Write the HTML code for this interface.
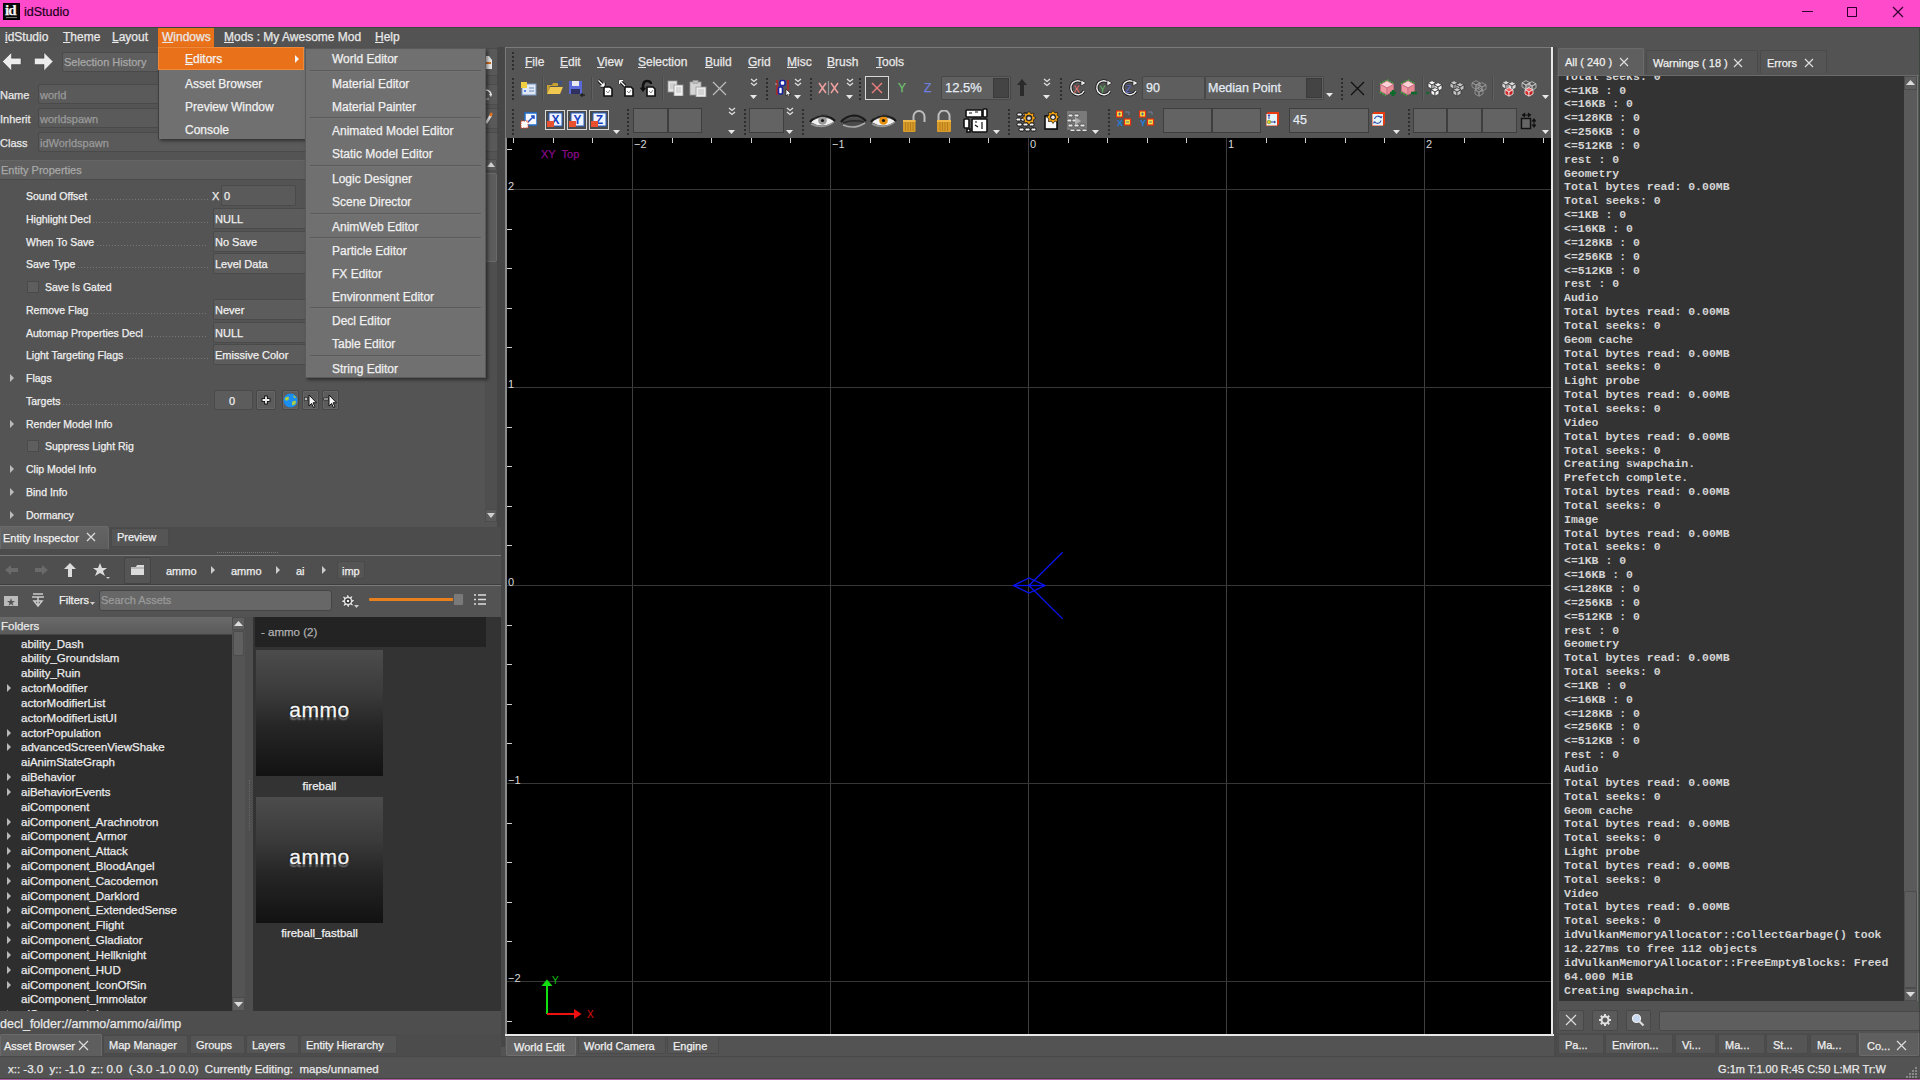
<!DOCTYPE html><html><head><meta charset="utf-8"><title>idStudio</title><style>
*{margin:0;padding:0;box-sizing:border-box}
html,body{width:1920px;height:1080px;overflow:hidden;background:#535353}
body{position:relative;font-family:"Liberation Sans",sans-serif;font-size:12px;color:#f0f0f0}
div{position:absolute}
.t{white-space:nowrap;line-height:14px;-webkit-text-stroke:.25px currentColor}
.m{font-family:"Liberation Mono",monospace;font-size:11.5px;font-weight:bold;white-space:nowrap;line-height:14px;color:#d4d4d4}
u{text-decoration:underline;text-underline-offset:1px}
.fld{background:#5c5c5c;border:1px solid #474747;border-radius:2px}
.btn{background:#5a5a5a;border:1px solid #474747;border-radius:2px}
.tab{background:#555;border:1px solid #484848;border-bottom:none;border-radius:2px 2px 0 0}
.tabA{background:#626262;border:1px solid #6a6a6a;border-bottom:none;border-radius:2px 2px 0 0}
</style></head><body>
<div style="left:0px;top:0px;width:1920px;height:27px;background:#ff4bcb"></div>
<div style="left:3px;top:3px;width:17px;height:17px;background:#0a0a0a;border:1px solid #000"><div class="t" style="left:1px;top:0px;font-family:Liberation Serif;font-size:15px;line-height:13px;font-weight:bold;color:#f4f4f4;letter-spacing:-1px">id</div><div style="left:2px;top:13px;width:11px;height:1px;background:#777"></div></div>
<div class="t" style="left:24px;top:5px;font-size:12.5px;color:#1a001a;-webkit-text-stroke:.2px #1a001a">idStudio</div>
<div style="left:1802px;top:11px;width:11px;height:1px;background:#300030"></div>
<div style="left:1847px;top:7px;width:10px;height:10px;border:1px solid #300030"></div>
<svg style="position:absolute;left:1892px;top:6px;" width="12" height="12" viewBox="0 0 12 12"><path d="M1 1L11 11M11 1L1 11" stroke="#300030" stroke-width="1.2"/></svg>
<div style="left:0px;top:27px;width:1920px;height:22px;background:#535353;border-top:1px solid #3c463c;border-bottom:1px solid #444"></div>
<div style="left:158px;top:28px;width:56px;height:20px;background:#e8711a"></div>
<div class="t" style="left:5px;top:30px;color:#e8e8e8"><u>i</u>dStudio</div>
<div class="t" style="left:63px;top:30px;color:#e8e8e8"><u>T</u>heme</div>
<div class="t" style="left:112px;top:30px;color:#e8e8e8"><u>L</u>ayout</div>
<div class="t" style="left:162px;top:30px;color:#e8e8e8"><u>W</u>indows</div>
<div class="t" style="left:224px;top:30px;color:#e8e8e8"><u>M</u>ods : My Awesome Mod</div>
<div class="t" style="left:375px;top:30px;color:#e8e8e8"><u>H</u>elp</div>
<div style="left:0px;top:47px;width:501px;height:480px;background:#545454"></div>
<div style="left:497px;top:47px;width:8px;height:1000px;background:#474747"></div>
<svg style="position:absolute;left:2px;top:52px;" width="20" height="20" viewBox="0 0 20 20"><path d="M0.5 9.5L9.5 0.5V6.2H19V12.6H9.5V18.7Z" fill="#ececec" stroke="#3a3a3a" stroke-width=".5"/></svg>
<svg style="position:absolute;left:34px;top:52px;" width="20" height="20" viewBox="0 0 20 20"><path d="M19 9.5L10 0.5V6.2H0.5V12.6H10V18.7Z" fill="#ececec" stroke="#3a3a3a" stroke-width=".5"/></svg>
<div style="left:62px;top:52px;width:424px;height:20px;background:#5e5e5e;border:1px solid #4a4a4a;border-radius:2px"></div>
<div class="t" style="left:64px;top:55px;color:#a8a8a8;font-size:11px">Selection History</div>
<div style="left:485px;top:48px;width:13px;height:28px;background:#595959;border:1px solid #4c4c4c;border-radius:2px"></div>
<div style="left:485px;top:84px;width:13px;height:21px;background:#595959;border:1px solid #4c4c4c;border-radius:2px"></div>
<div style="left:485px;top:108px;width:13px;height:21px;background:#595959;border:1px solid #4c4c4c;border-radius:2px"></div>
<div style="left:485px;top:132px;width:13px;height:20px;background:#595959;border:1px solid #4c4c4c;border-radius:2px"></div>
<svg style="position:absolute;left:486px;top:56px;" width="6" height="14" viewBox="0 0 6 14"><path d="M0 0H3L6 4V13H0Z" fill="#e8e8e8"/><rect x="0" y="6" width="5" height="2" fill="#d07020"/></svg>
<svg style="position:absolute;left:486px;top:88px;" width="6" height="12" viewBox="0 0 6 12"><path d="M0 2A5 5 0 0 1 5 7" stroke="#e8e8e8" stroke-width="1.6" fill="none"/><path d="M3 6L5 9L6 6Z" fill="#e8e8e8"/><path d="M0 11H3" stroke="#ccc"/></svg>
<svg style="position:absolute;left:486px;top:111px;" width="7" height="13" viewBox="0 0 7 13"><path d="M0 12L5 4" stroke="#e8e8e8" stroke-width="2.5"/><path d="M4 5L6 2" stroke="#e07020" stroke-width="2.5"/></svg>
<div class="t" style="left:0px;top:88px;font-size:11px;color:#e8e8e8">Name</div>
<div style="left:38px;top:84px;width:447px;height:20px;background:#5a5a5a;border:1px solid #4a4a4a;border-radius:2px"></div>
<div class="t" style="left:40px;top:88px;font-size:11px;color:#9a9a9a">world</div>
<div class="t" style="left:0px;top:112px;font-size:11px;color:#e8e8e8">Inherit</div>
<div style="left:38px;top:108px;width:447px;height:20px;background:#5a5a5a;border:1px solid #4a4a4a;border-radius:2px"></div>
<div class="t" style="left:40px;top:112px;font-size:11px;color:#9a9a9a">worldspawn</div>
<div class="t" style="left:0px;top:136px;font-size:11px;color:#e8e8e8">Class</div>
<div style="left:38px;top:132px;width:447px;height:20px;background:#5a5a5a;border:1px solid #4a4a4a;border-radius:2px"></div>
<div class="t" style="left:40px;top:136px;font-size:11px;color:#9a9a9a">idWorldspawn</div>
<div style="left:0px;top:160px;width:485px;height:20px;background:#5f5f5f;border-top:1px solid #666;border-bottom:1px solid #4a4a4a"></div>
<div class="t" style="left:1px;top:163px;font-size:11px;color:#a8a8a8">Entity Properties</div>
<div style="left:485px;top:159px;width:12px;height:363px;background:#4f4f4f"></div>
<div style="left:485px;top:159px;width:12px;height:12px;background:#5a5a5a;border:1px solid #4c4c4c"></div>
<svg style="position:absolute;left:487px;top:162px;" width="8" height="5" viewBox="0 0 8 5"><path d="M0 5L4 0L8 5Z" fill="#d0d0d0"/></svg>
<div style="left:485px;top:173px;width:12px;height:89px;background:#5c5c5c;border:1px solid #6a6a6a;border-radius:2px"></div>
<div style="left:485px;top:509px;width:12px;height:13px;background:#5a5a5a;border:1px solid #4c4c4c"></div>
<svg style="position:absolute;left:487px;top:513px;" width="8" height="5" viewBox="0 0 8 5"><path d="M0 0L4 5L8 0Z" fill="#d0d0d0"/></svg>
<div class="t" style="left:26px;top:189px;font-size:10.5px">Sound Offset</div>
<div style="left:90px;top:199px;width:118px;height:1px;background:repeating-linear-gradient(90deg,#777 0 1px,transparent 1px 3px)"></div>
<div class="t" style="left:212px;top:189px;font-size:11px">X</div>
<div style="left:221px;top:185px;width:75px;height:21px;background:#5a5a5a;border:1px solid #4a4a4a;border-radius:2px"></div>
<div class="t" style="left:224px;top:189px;font-size:11px">0</div>
<div class="t" style="left:26px;top:212px;font-size:10.5px">Highlight Decl</div>
<div style="left:93px;top:222px;width:115px;height:1px;background:repeating-linear-gradient(90deg,#777 0 1px,transparent 1px 3px)"></div>
<div style="left:213px;top:208px;width:272px;height:21px;background:#5c5c5c;border:1px solid #4a4a4a;border-radius:2px"></div>
<div class="t" style="left:215px;top:212px;font-size:11px">NULL</div>
<div class="t" style="left:26px;top:235px;font-size:10.5px">When To Save</div>
<div style="left:97px;top:245px;width:111px;height:1px;background:repeating-linear-gradient(90deg,#777 0 1px,transparent 1px 3px)"></div>
<div style="left:213px;top:231px;width:272px;height:21px;background:#5c5c5c;border:1px solid #4a4a4a;border-radius:2px"></div>
<div class="t" style="left:215px;top:235px;font-size:11px">No Save</div>
<div class="t" style="left:26px;top:257px;font-size:10.5px">Save Type</div>
<div style="left:78px;top:267px;width:130px;height:1px;background:repeating-linear-gradient(90deg,#777 0 1px,transparent 1px 3px)"></div>
<div style="left:213px;top:253px;width:272px;height:21px;background:#5c5c5c;border:1px solid #4a4a4a;border-radius:2px"></div>
<div class="t" style="left:215px;top:257px;font-size:11px">Level Data</div>
<div style="left:27px;top:281px;width:12px;height:12px;background:#5e5e5e;border:1px solid #4a4a4a"></div>
<div class="t" style="left:45px;top:280px;font-size:10.5px">Save Is Gated</div>
<div class="t" style="left:26px;top:303px;font-size:10.5px">Remove Flag</div>
<div style="left:91px;top:313px;width:117px;height:1px;background:repeating-linear-gradient(90deg,#777 0 1px,transparent 1px 3px)"></div>
<div style="left:213px;top:299px;width:272px;height:21px;background:#5c5c5c;border:1px solid #4a4a4a;border-radius:2px"></div>
<div class="t" style="left:215px;top:303px;font-size:11px">Never</div>
<div class="t" style="left:26px;top:326px;font-size:10.5px">Automap Properties Decl</div>
<div style="left:145px;top:336px;width:63px;height:1px;background:repeating-linear-gradient(90deg,#777 0 1px,transparent 1px 3px)"></div>
<div style="left:213px;top:322px;width:272px;height:21px;background:#5c5c5c;border:1px solid #4a4a4a;border-radius:2px"></div>
<div class="t" style="left:215px;top:326px;font-size:11px">NULL</div>
<div class="t" style="left:26px;top:348px;font-size:10.5px">Light Targeting Flags</div>
<div style="left:126px;top:358px;width:82px;height:1px;background:repeating-linear-gradient(90deg,#777 0 1px,transparent 1px 3px)"></div>
<div style="left:213px;top:344px;width:272px;height:21px;background:#5c5c5c;border:1px solid #4a4a4a;border-radius:2px"></div>
<div class="t" style="left:215px;top:348px;font-size:11px">Emissive Color</div>
<svg style="position:absolute;left:10px;top:374px;" width="5" height="8" viewBox="0 0 5 8"><path d="M0 0L4 4L0 8Z" fill="#bbb"/></svg>
<div class="t" style="left:26px;top:371px;font-size:10.5px">Flags</div>
<div class="t" style="left:26px;top:394px;font-size:10.5px">Targets</div>
<div style="left:63px;top:404px;width:145px;height:1px;background:repeating-linear-gradient(90deg,#777 0 1px,transparent 1px 3px)"></div>
<svg style="position:absolute;left:10px;top:420px;" width="5" height="8" viewBox="0 0 5 8"><path d="M0 0L4 4L0 8Z" fill="#bbb"/></svg>
<div class="t" style="left:26px;top:417px;font-size:10.5px">Render Model Info</div>
<div style="left:27px;top:440px;width:12px;height:12px;background:#5e5e5e;border:1px solid #4a4a4a"></div>
<div class="t" style="left:45px;top:439px;font-size:10.5px">Suppress Light Rig</div>
<svg style="position:absolute;left:10px;top:465px;" width="5" height="8" viewBox="0 0 5 8"><path d="M0 0L4 4L0 8Z" fill="#bbb"/></svg>
<div class="t" style="left:26px;top:462px;font-size:10.5px">Clip Model Info</div>
<svg style="position:absolute;left:10px;top:488px;" width="5" height="8" viewBox="0 0 5 8"><path d="M0 0L4 4L0 8Z" fill="#bbb"/></svg>
<div class="t" style="left:26px;top:485px;font-size:10.5px">Bind Info</div>
<svg style="position:absolute;left:10px;top:511px;" width="5" height="8" viewBox="0 0 5 8"><path d="M0 0L4 4L0 8Z" fill="#bbb"/></svg>
<div class="t" style="left:26px;top:508px;font-size:10.5px">Dormancy</div>
<div style="left:214px;top:390px;width:39px;height:20px;background:#5c5c5c;border:1px solid #4a4a4a;border-radius:2px"></div>
<div class="t" style="left:229px;top:394px;font-size:11px">0</div>
<div style="left:256px;top:390px;width:20px;height:20px;background:#5c5c5c;border:1px solid #474747;box-shadow:inset 0 0 0 1px #666;border-radius:2px"></div>
<svg style="position:absolute;left:260px;top:394px;" width="12" height="12" viewBox="0 0 12 12"><path d="M6 1.5V10.5M1.5 6H10.5" stroke="#111" stroke-width="3.6"/><path d="M6 2.5V9.5M2.5 6H9.5" stroke="#f0f0f0" stroke-width="1.8"/></svg>
<div style="left:282px;top:390px;width:17px;height:20px;background:#5c5c5c;border:1px solid #474747;box-shadow:inset 0 0 0 1px #666;border-radius:2px"></div>
<div style="left:302px;top:390px;width:17px;height:20px;background:#5c5c5c;border:1px solid #474747;box-shadow:inset 0 0 0 1px #666;border-radius:2px"></div>
<div style="left:322px;top:390px;width:17px;height:20px;background:#5c5c5c;border:1px solid #474747;box-shadow:inset 0 0 0 1px #666;border-radius:2px"></div>
<svg style="position:absolute;left:283px;top:393px;" width="15" height="15" viewBox="0 0 15 15"><circle cx="7.5" cy="7.5" r="7" fill="#1a8ef0"/><path d="M2 5Q4 3 6 4L5.5 7Q3 8 2 7Z M9 9Q11 7 13 8L12.5 11Q10 13 9 12Z M10 2Q12 3 13 5L11 5Z" fill="#a8cc48"/></svg>
<svg style="position:absolute;left:303px;top:393px;" width="15" height="16" viewBox="0 0 15 16"><path d="M6 2L6 13L8.5 10.5L10.5 14.5L12 13.8L10 9.8H13.5Z" fill="#f8f8f8" stroke="#111" stroke-width="1"/><path d="M1 6H5M3 4V8" stroke="#111" stroke-width="2.6"/><path d="M1.5 6H4.5M3 4.5V7.5" stroke="#f0f0f0" stroke-width="1.1"/></svg>
<svg style="position:absolute;left:323px;top:393px;" width="15" height="16" viewBox="0 0 15 16"><path d="M6 2L6 13L8.5 10.5L10.5 14.5L12 13.8L10 9.8H13.5Z" fill="#f8f8f8" stroke="#111" stroke-width="1"/><path d="M0.5 6H5.5" stroke="#111" stroke-width="2.6"/><path d="M1 6H5" stroke="#f0f0f0" stroke-width="1.1"/></svg>
<div style="left:0px;top:527px;width:501px;height:22px;background:#4c4c4c"></div>
<div style="left:0px;top:526px;width:109px;height:23px;background:linear-gradient(#646464,#5c5c5c);border:1px solid #6a6a6a;border-bottom:none;border-radius:0 3px 0 0"></div>
<div class="t" style="left:3px;top:531px;font-size:11px">Entity Inspector</div>
<svg style="position:absolute;left:86px;top:532px;" width="10" height="10" viewBox="0 0 10 10"><path d="M1 1L9 9M9 1L1 9" stroke="#ddd" stroke-width="1.2"/></svg>
<div style="left:111px;top:528px;width:58px;height:19px;background:#555;border:1px solid #4a4a4a;border-radius:2px 2px 2px 2px"></div>
<div class="t" style="left:117px;top:530px;font-size:11px">Preview</div>
<div style="left:0px;top:549px;width:501px;height:6px;background:#4c4c4c"></div>
<div style="left:217px;top:552px;width:61px;height:1px;border-top:1px dotted #777"></div>
<div style="left:0px;top:555px;width:501px;height:1px;background:#7a7a7a"></div>
<div style="left:0px;top:556px;width:501px;height:478px;background:#4e4e4e"></div>
<div style="left:0px;top:556px;width:501px;height:30px;background:#4f4f4f;border-bottom:1px solid #7a7a7a"></div>
<div style="left:0px;top:584px;width:501px;height:1px;background:#3e3e3e"></div>
<svg style="position:absolute;left:4px;top:563px;" width="16" height="14" viewBox="0 0 16 14"><path d="M1 7L7 2V5H14V9H7V12Z" fill="#6a6a6a"/></svg>
<svg style="position:absolute;left:33px;top:563px;" width="16" height="14" viewBox="0 0 16 14"><path d="M15 7L9 2V5H2V9H9V12Z" fill="#6a6a6a"/></svg>
<svg style="position:absolute;left:63px;top:562px;" width="14" height="16" viewBox="0 0 14 16"><path d="M7 1L1 7H5V15H9V7H13Z" fill="#dcdcdc"/></svg>
<svg style="position:absolute;left:92px;top:562px;" width="18" height="18" viewBox="0 0 18 18"><path d="M8 1L10 6H15L11 9L13 14L8 11L3 14L5 9L1 6H6Z" fill="#dcdcdc"/><path d="M14 15L16 17L18 15Z" fill="#ccc"/></svg>
<div style="left:124px;top:557px;width:27px;height:27px;background:#555;border:1px solid #444;border-radius:2px"></div>
<svg style="position:absolute;left:130px;top:564px;" width="15" height="12" viewBox="0 0 15 12"><path d="M1 3H6L7 1H14V11H1Z" fill="#dcdcdc"/><path d="M1 4H14" stroke="#999"/></svg>
<div class="t" style="left:166px;top:564px;font-size:11px">ammo</div>
<div class="t" style="left:231px;top:564px;font-size:11px">ammo</div>
<div class="t" style="left:296px;top:564px;font-size:11px">ai</div>
<svg style="position:absolute;left:211px;top:566px;" width="5" height="8" viewBox="0 0 5 8"><path d="M0 0L4 4L0 8Z" fill="#ccc"/></svg>
<svg style="position:absolute;left:276px;top:566px;" width="5" height="8" viewBox="0 0 5 8"><path d="M0 0L4 4L0 8Z" fill="#ccc"/></svg>
<svg style="position:absolute;left:322px;top:566px;" width="5" height="8" viewBox="0 0 5 8"><path d="M0 0L4 4L0 8Z" fill="#ccc"/></svg>
<div style="left:337px;top:561px;width:28px;height:18px;background:#555;border:1px solid #4a4a4a;border-radius:2px"></div>
<div class="t" style="left:342px;top:564px;font-size:11px">imp</div>
<div style="left:0px;top:586px;width:501px;height:31px;background:#535353"></div>
<svg style="position:absolute;left:3px;top:593px;" width="16" height="14" viewBox="0 0 16 14"><rect x="1" y="3" width="14" height="10" fill="#bbb"/><path d="M8 5L9 8H12L9.5 10L10.5 13L8 11L5.5 13L6.5 10L4 8H7Z" fill="#555"/></svg>
<svg style="position:absolute;left:30px;top:592px;" width="16" height="17" viewBox="0 0 16 17"><path d="M3 2H13M2 5H14M8 5V14M4 9H12L8 14Z" stroke="#ccc" fill="none" stroke-width="1.5"/></svg>
<div class="t" style="left:59px;top:593px;font-size:11px">Filters</div>
<svg style="position:absolute;left:90px;top:602px;" width="5" height="3" viewBox="0 0 5 3"><path d="M0 0L2.5 3L5 0Z" fill="#ccc"/></svg>
<div style="left:99px;top:590px;width:233px;height:21px;background:#676767;border:1px solid #444;border-radius:3px"></div>
<div class="t" style="left:101px;top:593px;font-size:11px;color:#9a9a9a">Search Assets</div>
<svg style="position:absolute;left:340px;top:593px;" width="16" height="16" viewBox="0 0 16 16"><path d="M14.5,7.0 L14.6,8.3 L12.5,9.1 L12.2,10.0 L13.3,11.9 L12.4,12.9 L10.4,11.9 L9.5,12.3 L9.0,14.5 L7.7,14.6 L6.9,12.5 L6.0,12.2 L4.1,13.3 L3.1,12.4 L4.1,10.4 L3.7,9.5 L1.5,9.0 L1.4,7.7 L3.5,6.9 L3.8,6.0 L2.7,4.1 L3.6,3.1 L5.6,4.1 L6.5,3.7 L7.0,1.5 L8.3,1.4 L9.1,3.5 L10.0,3.8 L11.9,2.7 L12.9,3.6 L11.9,5.6 L12.3,6.5Z" fill="#dedede" stroke="#2a2a2a" stroke-width=".6"/><circle cx="8" cy="8" r="2.8" fill="#2a2a2a"/><circle cx="8" cy="8" r="1.3" fill="#f0f0f0"/></svg>
<svg style="position:absolute;left:354px;top:605px;" width="5" height="3" viewBox="0 0 5 3"><path d="M0 0L2.5 3L5 0Z" fill="#ccc"/></svg>
<div style="left:369px;top:598px;width:87px;height:3px;background:#e8801e;border-radius:1px"></div>
<div style="left:453px;top:593px;width:11px;height:13px;background:#7a7a7a;border:1px solid #555;border-radius:2px"></div>
<svg style="position:absolute;left:473px;top:593px;" width="14" height="13" viewBox="0 0 14 13"><path d="M1 2H3M1 6.5H3M1 11H3M5 2H13M5 6.5H13M5 11H13" stroke="#ddd" stroke-width="1.6"/></svg>
<div style="left:0px;top:617px;width:232px;height:394px;background:#2e2e2e"></div>
<div style="left:0px;top:617px;width:232px;height:18px;background:linear-gradient(#6a6a6a,#5a5a5a);border-bottom:1px solid #444"></div>
<div class="t" style="left:1px;top:619px;font-size:11.5px;color:#e8e8e8">Folders</div>
<div style="left:232px;top:617px;width:13px;height:394px;background:#545454"></div>
<div style="left:232px;top:617px;width:13px;height:13px;background:#5e5e5e;border:1px solid #4c4c4c"></div>
<svg style="position:absolute;left:234px;top:621px;" width="9" height="5" viewBox="0 0 9 5"><path d="M0 5L4.5 0L9 5Z" fill="#ddd"/></svg>
<div style="left:233px;top:631px;width:11px;height:25px;background:#606060;border:1px solid #4c4c4c;border-radius:2px"></div>
<div style="left:232px;top:997px;width:13px;height:14px;background:#5e5e5e;border:1px solid #4c4c4c"></div>
<svg style="position:absolute;left:234px;top:1002px;" width="9" height="5" viewBox="0 0 9 5"><path d="M0 0L4.5 5L9 0Z" fill="#ddd"/></svg>
<div style="left:0;top:635px;width:232px;height:376px;overflow:hidden">
<div class="t" style="left:21px;top:1.5px;font-size:11.5px;color:#ececec">ability_Dash</div>
<div class="t" style="left:21px;top:16.3px;font-size:11.5px;color:#ececec">ability_Groundslam</div>
<div class="t" style="left:21px;top:31.2px;font-size:11.5px;color:#ececec">ability_Ruin</div>
<svg style="position:absolute;left:7px;top:49.0px" width="5" height="8"><path d="M0 0L4 4L0 8Z" fill="#b8b8b8"/></svg>
<div class="t" style="left:21px;top:46.0px;font-size:11.5px;color:#ececec">actorModifier</div>
<div class="t" style="left:21px;top:60.8px;font-size:11.5px;color:#ececec">actorModifierList</div>
<div class="t" style="left:21px;top:75.6px;font-size:11.5px;color:#ececec">actorModifierListUI</div>
<svg style="position:absolute;left:7px;top:93.5px" width="5" height="8"><path d="M0 0L4 4L0 8Z" fill="#b8b8b8"/></svg>
<div class="t" style="left:21px;top:90.5px;font-size:11.5px;color:#ececec">actorPopulation</div>
<svg style="position:absolute;left:7px;top:108.3px" width="5" height="8"><path d="M0 0L4 4L0 8Z" fill="#b8b8b8"/></svg>
<div class="t" style="left:21px;top:105.3px;font-size:11.5px;color:#ececec">advancedScreenViewShake</div>
<div class="t" style="left:21px;top:120.1px;font-size:11.5px;color:#ececec">aiAnimStateGraph</div>
<svg style="position:absolute;left:7px;top:138.0px" width="5" height="8"><path d="M0 0L4 4L0 8Z" fill="#b8b8b8"/></svg>
<div class="t" style="left:21px;top:135.0px;font-size:11.5px;color:#ececec">aiBehavior</div>
<svg style="position:absolute;left:7px;top:152.8px" width="5" height="8"><path d="M0 0L4 4L0 8Z" fill="#b8b8b8"/></svg>
<div class="t" style="left:21px;top:149.8px;font-size:11.5px;color:#ececec">aiBehaviorEvents</div>
<div class="t" style="left:21px;top:164.6px;font-size:11.5px;color:#ececec">aiComponent</div>
<svg style="position:absolute;left:7px;top:182.5px" width="5" height="8"><path d="M0 0L4 4L0 8Z" fill="#b8b8b8"/></svg>
<div class="t" style="left:21px;top:179.5px;font-size:11.5px;color:#ececec">aiComponent_Arachnotron</div>
<svg style="position:absolute;left:7px;top:197.3px" width="5" height="8"><path d="M0 0L4 4L0 8Z" fill="#b8b8b8"/></svg>
<div class="t" style="left:21px;top:194.3px;font-size:11.5px;color:#ececec">aiComponent_Armor</div>
<svg style="position:absolute;left:7px;top:212.1px" width="5" height="8"><path d="M0 0L4 4L0 8Z" fill="#b8b8b8"/></svg>
<div class="t" style="left:21px;top:209.1px;font-size:11.5px;color:#ececec">aiComponent_Attack</div>
<svg style="position:absolute;left:7px;top:227.0px" width="5" height="8"><path d="M0 0L4 4L0 8Z" fill="#b8b8b8"/></svg>
<div class="t" style="left:21px;top:224.0px;font-size:11.5px;color:#ececec">aiComponent_BloodAngel</div>
<svg style="position:absolute;left:7px;top:241.8px" width="5" height="8"><path d="M0 0L4 4L0 8Z" fill="#b8b8b8"/></svg>
<div class="t" style="left:21px;top:238.8px;font-size:11.5px;color:#ececec">aiComponent_Cacodemon</div>
<svg style="position:absolute;left:7px;top:256.6px" width="5" height="8"><path d="M0 0L4 4L0 8Z" fill="#b8b8b8"/></svg>
<div class="t" style="left:21px;top:253.6px;font-size:11.5px;color:#ececec">aiComponent_Darklord</div>
<svg style="position:absolute;left:7px;top:271.4px" width="5" height="8"><path d="M0 0L4 4L0 8Z" fill="#b8b8b8"/></svg>
<div class="t" style="left:21px;top:268.4px;font-size:11.5px;color:#ececec">aiComponent_ExtendedSense</div>
<svg style="position:absolute;left:7px;top:286.3px" width="5" height="8"><path d="M0 0L4 4L0 8Z" fill="#b8b8b8"/></svg>
<div class="t" style="left:21px;top:283.3px;font-size:11.5px;color:#ececec">aiComponent_Flight</div>
<svg style="position:absolute;left:7px;top:301.1px" width="5" height="8"><path d="M0 0L4 4L0 8Z" fill="#b8b8b8"/></svg>
<div class="t" style="left:21px;top:298.1px;font-size:11.5px;color:#ececec">aiComponent_Gladiator</div>
<svg style="position:absolute;left:7px;top:315.9px" width="5" height="8"><path d="M0 0L4 4L0 8Z" fill="#b8b8b8"/></svg>
<div class="t" style="left:21px;top:312.9px;font-size:11.5px;color:#ececec">aiComponent_Hellknight</div>
<svg style="position:absolute;left:7px;top:330.8px" width="5" height="8"><path d="M0 0L4 4L0 8Z" fill="#b8b8b8"/></svg>
<div class="t" style="left:21px;top:327.8px;font-size:11.5px;color:#ececec">aiComponent_HUD</div>
<svg style="position:absolute;left:7px;top:345.6px" width="5" height="8"><path d="M0 0L4 4L0 8Z" fill="#b8b8b8"/></svg>
<div class="t" style="left:21px;top:342.6px;font-size:11.5px;color:#ececec">aiComponent_IconOfSin</div>
<div class="t" style="left:21px;top:357.4px;font-size:11.5px;color:#ececec">aiComponent_Immolator</div>
<svg style="position:absolute;left:7px;top:375.2px" width="5" height="8"><path d="M0 0L4 4L0 8Z" fill="#b8b8b8"/></svg>
<div class="t" style="left:21px;top:372.2px;font-size:11.5px;color:#ececec">aiComponent_Imp</div>
</div>
<div style="left:249px;top:780px;width:1px;height:50px;border-left:1px dotted #666"></div>
<div style="left:253px;top:617px;width:248px;height:394px;background:#333"></div>
<div style="left:255px;top:617px;width:231px;height:30px;background:#232323"></div>
<div class="t" style="left:261px;top:625px;font-size:11.5px;color:#b0b0b0">- ammo (2)</div>
<div style="left:256px;top:650px;width:127px;height:126px;background:linear-gradient(#4c4c4c 0%,#3a3a3a 35%,#262626 60%,#121212 100%)"></div>
<div class="t" style="left:256px;top:699px;width:127px;text-align:center;font-size:21px;line-height:22px;letter-spacing:.5px;color:#f6f6f6;-webkit-text-stroke:.3px #fff;text-shadow:0 0 1.5px #000,0 0 2px #000,0 3px 1.5px rgba(190,190,190,.55)">ammo</div>
<div class="t" style="left:256px;top:779px;width:127px;text-align:center;font-size:11.5px;color:#f0f0f0">fireball</div>
<div style="left:256px;top:797px;width:127px;height:126px;background:linear-gradient(#4c4c4c 0%,#3a3a3a 35%,#262626 60%,#121212 100%)"></div>
<div class="t" style="left:256px;top:846px;width:127px;text-align:center;font-size:21px;line-height:22px;letter-spacing:.5px;color:#f6f6f6;-webkit-text-stroke:.3px #fff;text-shadow:0 0 1.5px #000,0 0 2px #000,0 3px 1.5px rgba(190,190,190,.55)">ammo</div>
<div class="t" style="left:256px;top:926px;width:127px;text-align:center;font-size:11.5px;color:#f0f0f0">fireball_fastball</div>
<div style="left:0px;top:1011px;width:501px;height:23px;background:#4e4e4e"></div>
<div class="t" style="left:0px;top:1017px;font-size:12.5px;color:#e8e8e8">decl_folder://ammo/ammo/ai/imp</div>
<div style="left:0px;top:1034px;width:501px;height:22px;background:#4c4c4c"></div>
<div style="left:0px;top:1034px;width:102px;height:22px;background:#5e5e5e;border:1px solid #6a6a6a;border-bottom:none;border-radius:2px 2px 0 0"></div>
<div class="t" style="left:4px;top:1039px;font-size:11px">Asset Browser</div>
<svg style="position:absolute;left:78px;top:1040px;" width="11" height="11" viewBox="0 0 11 11"><path d="M1 1L10 10M10 1L1 10" stroke="#ddd" stroke-width="1.2"/></svg>
<div style="left:103px;top:1035px;width:85px;height:19px;background:#555;border:1px solid #4a4a4a;border-radius:2px 2px 0 0"></div>
<div class="t" style="left:109px;top:1038px;font-size:11px">Map Manager</div>
<div style="left:190px;top:1035px;width:55px;height:19px;background:#555;border:1px solid #4a4a4a;border-radius:2px 2px 0 0"></div>
<div class="t" style="left:196px;top:1038px;font-size:11px">Groups</div>
<div style="left:246px;top:1035px;width:53px;height:19px;background:#555;border:1px solid #4a4a4a;border-radius:2px 2px 0 0"></div>
<div class="t" style="left:252px;top:1038px;font-size:11px">Layers</div>
<div style="left:300px;top:1035px;width:97px;height:19px;background:#555;border:1px solid #4a4a4a;border-radius:2px 2px 0 0"></div>
<div class="t" style="left:306px;top:1038px;font-size:11px">Entity Hierarchy</div>
<div style="left:158px;top:47px;width:147px;height:92px;background:#707070;border-left:1px solid #3e3e3e;box-shadow:2px 2px 3px rgba(0,0,0,.45)"></div>
<div style="left:158px;top:47px;width:146px;height:23px;background:#e8711a;border:1px solid #f08a38"></div>
<div class="t" style="left:185px;top:52px;color:#f4f4f4"><u>E</u>ditors</div>
<svg style="position:absolute;left:295px;top:55px;" width="5" height="8" viewBox="0 0 5 8"><path d="M0 0L4 4L0 8Z" fill="#f4f4f4"/></svg>
<div class="t" style="left:185px;top:77px;color:#f0f0f0">Asset Browser</div>
<div class="t" style="left:185px;top:100px;color:#f0f0f0">Preview Window</div>
<div class="t" style="left:185px;top:123px;color:#f0f0f0">Console</div>
<div style="left:305px;top:48px;width:181px;height:330px;background:#707070;border:1px solid #5a5a5a;box-shadow:2px 2px 3px rgba(0,0,0,.45)"></div>
<div class="t" style="left:332px;top:52px;color:#f0f0f0">World Editor</div>
<div class="t" style="left:332px;top:77px;color:#f0f0f0">Material Editor</div>
<div class="t" style="left:332px;top:100px;color:#f0f0f0">Material Painter</div>
<div class="t" style="left:332px;top:124px;color:#f0f0f0">Animated Model Editor</div>
<div class="t" style="left:332px;top:147px;color:#f0f0f0">Static Model Editor</div>
<div class="t" style="left:332px;top:172px;color:#f0f0f0">Logic Designer</div>
<div class="t" style="left:332px;top:195px;color:#f0f0f0">Scene Director</div>
<div class="t" style="left:332px;top:220px;color:#f0f0f0">AnimWeb Editor</div>
<div class="t" style="left:332px;top:244px;color:#f0f0f0">Particle Editor</div>
<div class="t" style="left:332px;top:267px;color:#f0f0f0">FX Editor</div>
<div class="t" style="left:332px;top:290px;color:#f0f0f0">Environment Editor</div>
<div class="t" style="left:332px;top:314px;color:#f0f0f0">Decl Editor</div>
<div class="t" style="left:332px;top:337px;color:#f0f0f0">Table Editor</div>
<div class="t" style="left:332px;top:362px;color:#f0f0f0">String Editor</div>
<div style="left:310px;top:70px;width:171px;height:1px;background:#5a5a5a"></div>
<div style="left:310px;top:71px;width:171px;height:1px;background:#747474"></div>
<div style="left:310px;top:117px;width:171px;height:1px;background:#5a5a5a"></div>
<div style="left:310px;top:118px;width:171px;height:1px;background:#747474"></div>
<div style="left:310px;top:165px;width:171px;height:1px;background:#5a5a5a"></div>
<div style="left:310px;top:166px;width:171px;height:1px;background:#747474"></div>
<div style="left:310px;top:213px;width:171px;height:1px;background:#5a5a5a"></div>
<div style="left:310px;top:214px;width:171px;height:1px;background:#747474"></div>
<div style="left:310px;top:237px;width:171px;height:1px;background:#5a5a5a"></div>
<div style="left:310px;top:238px;width:171px;height:1px;background:#747474"></div>
<div style="left:310px;top:307px;width:171px;height:1px;background:#5a5a5a"></div>
<div style="left:310px;top:308px;width:171px;height:1px;background:#747474"></div>
<div style="left:310px;top:355px;width:171px;height:1px;background:#5a5a5a"></div>
<div style="left:310px;top:356px;width:171px;height:1px;background:#747474"></div>
<div style="left:505px;top:47px;width:1048px;height:990px;background:#555;border-top:1px solid #7a7a7a;border-left:1px solid #7a7a7a"></div>
<div class="t" style="left:525px;top:55px;color:#e8e8e8"><u>F</u>ile</div>
<div class="t" style="left:560px;top:55px;color:#e8e8e8"><u>E</u>dit</div>
<div class="t" style="left:597px;top:55px;color:#e8e8e8"><u>V</u>iew</div>
<div class="t" style="left:638px;top:55px;color:#e8e8e8"><u>S</u>election</div>
<div class="t" style="left:705px;top:55px;color:#e8e8e8"><u>B</u>uild</div>
<div class="t" style="left:748px;top:55px;color:#e8e8e8"><u>G</u>rid</div>
<div class="t" style="left:787px;top:55px;color:#e8e8e8"><u>M</u>isc</div>
<div class="t" style="left:827px;top:55px;color:#e8e8e8"><u>B</u>rush</div>
<div class="t" style="left:876px;top:55px;color:#e8e8e8"><u>T</u>ools</div>
<div style="left:512px;top:52px;width:2px;height:20px;background:repeating-linear-gradient(#2e2e2e 0 2px,transparent 2px 4px)"></div>
<div style="left:512px;top:78px;width:2px;height:22px;background:repeating-linear-gradient(#2e2e2e 0 2px,transparent 2px 4px)"></div>
<div style="left:766px;top:78px;width:2px;height:22px;background:repeating-linear-gradient(#2e2e2e 0 2px,transparent 2px 4px)"></div>
<div style="left:810px;top:78px;width:2px;height:22px;background:repeating-linear-gradient(#2e2e2e 0 2px,transparent 2px 4px)"></div>
<div style="left:859px;top:78px;width:2px;height:22px;background:repeating-linear-gradient(#2e2e2e 0 2px,transparent 2px 4px)"></div>
<div style="left:1060px;top:78px;width:2px;height:22px;background:repeating-linear-gradient(#2e2e2e 0 2px,transparent 2px 4px)"></div>
<div style="left:1341px;top:78px;width:2px;height:22px;background:repeating-linear-gradient(#2e2e2e 0 2px,transparent 2px 4px)"></div>
<svg style="position:absolute;left:520px;top:80px;" width="17" height="16" viewBox="0 0 17 16"><rect x="2" y="4" width="14" height="11" fill="#dfe8f4" stroke="#7a95c0"/><rect x="1" y="2" width="6" height="6" fill="#f0d040"/><path d="M9 8H14M9 11H14" stroke="#6a8ab8"/><circle cx="5" cy="11" r="1" fill="#2a6ae0"/></svg>
<div style="left:542px;top:77px;width:1px;height:23px;background:#4a4a4a;border-right:1px solid #606060;width:2px"></div>
<svg style="position:absolute;left:546px;top:80px;" width="18" height="16" viewBox="0 0 18 16"><path d="M1 5H6L7 3H12V6H4L1 14Z" fill="#c8a030"/><path d="M4 7H17L14 14H1Z" fill="#f0c850"/><path d="M11 3L15 1V5" stroke="#3050a0" fill="none"/></svg>
<svg style="position:absolute;left:568px;top:80px;" width="18" height="17" viewBox="0 0 18 17"><rect x="1" y="1" width="13" height="13" fill="#5a6ad8"/><rect x="4" y="1" width="7" height="5" fill="#e8e8f0"/><rect x="3" y="9" width="9" height="5" fill="#303060"/><path d="M14 13V17M12 15H17" stroke="#111"/></svg>
<div style="left:591px;top:77px;width:1px;height:23px;background:#4a4a4a;border-right:1px solid #606060;width:2px"></div>
<svg style="position:absolute;left:597px;top:79px;" width="17" height="19" viewBox="0 0 17 19"><path d="M7 8H13L15 10V17H7Z" fill="#fff" stroke="#111" stroke-width="1.6"/><path d="M9 12L11 14L13 11" stroke="#888" stroke-width="1" fill="none"/><path d="M1.5 1.5L7 7M7 7V3.5M7 7H3.5" stroke="#111" stroke-width="3.2" fill="none"/><path d="M1.5 1.5L7 7M7 7V3.5M7 7H3.5" stroke="#fff" stroke-width="1.4" fill="none"/></svg>
<svg style="position:absolute;left:618px;top:79px;" width="17" height="19" viewBox="0 0 17 19"><path d="M7 8H13L15 10V17H7Z" fill="#fff" stroke="#111" stroke-width="1.6"/><path d="M9 12L11 14L13 11" stroke="#888" stroke-width="1" fill="none"/><path d="M7 7L1.5 1.5M1.5 1.5V5M1.5 1.5H5" stroke="#111" stroke-width="3.2" fill="none"/><path d="M7 7L1.5 1.5M1.5 1.5V5M1.5 1.5H5" stroke="#fff" stroke-width="1.4" fill="none"/></svg>
<svg style="position:absolute;left:640px;top:79px;" width="17" height="19" viewBox="0 0 17 19"><path d="M7 8H13L15 10V17H7Z" fill="#fff" stroke="#111" stroke-width="1.6"/><path d="M9 12L11 14L13 11" stroke="#888" stroke-width="1" fill="none"/><path d="M11 5Q11 2 7 2Q3 2 3 8V11" stroke="#111" stroke-width="2.6" fill="none"/><path d="M0.5 9L3 12.5L5.5 9Z" fill="#111" stroke="#111"/></svg>
<div style="left:662px;top:77px;width:1px;height:23px;background:#4a4a4a;border-right:1px solid #606060;width:2px"></div>
<svg style="position:absolute;left:667px;top:80px;" width="18" height="16" viewBox="0 0 18 16"><rect x="1" y="1" width="9" height="11" fill="#e4e4e4" stroke="#999" stroke-width=".8"/><path d="M3 4H8M3 6H8M3 8H8" stroke="#aaa" stroke-width=".7"/><rect x="7" y="5" width="9" height="11" fill="#f0f0f0" stroke="#999" stroke-width=".8"/><path d="M9 8H14M9 10H14M9 12H14" stroke="#aaa" stroke-width=".7"/></svg>
<svg style="position:absolute;left:689px;top:80px;" width="18" height="17" viewBox="0 0 18 17"><rect x="1" y="2" width="11" height="13" fill="#d4d4d4" stroke="#999" stroke-width=".8"/><rect x="4" y="0.5" width="5" height="3" fill="#bbb" stroke="#999" stroke-width=".6"/><rect x="7" y="7" width="10" height="10" fill="#ececec" stroke="#999" stroke-width=".8"/><path d="M9 10H15M9 12H15M9 14H15" stroke="#aaa" stroke-width=".7"/></svg>
<svg style="position:absolute;left:712px;top:81px;" width="15" height="15" viewBox="0 0 15 15"><path d="M1 1L14 14M14 1L1 14" stroke="#bbb" stroke-width="1.3"/></svg>
<svg style="position:absolute;left:750px;top:78px;" width="8" height="9" viewBox="0 0 8 9"><path d="M1 1L4 3.5L7 1M1 5L4 7.5L7 5" stroke="#e0e0e0" stroke-width="1.3" fill="none"/></svg>
<svg style="position:absolute;left:750px;top:95px;" width="7" height="4" viewBox="0 0 7 4"><path d="M0 0L3.5 4L7 0Z" fill="#e8e8e8"/></svg>
<svg style="position:absolute;left:775px;top:79px;" width="17" height="19" viewBox="0 0 17 19"><path d="M2 1V16M13 1V16" stroke="#d01818" stroke-width="1.2"/><rect x="5" y="1.5" width="5" height="5" rx="1.5" fill="#fff" stroke="#1820a0" stroke-width="1.6"/><rect x="3.5" y="8" width="4" height="7" rx="1.5" fill="#fff" stroke="#1820a0" stroke-width="1.6"/><path d="M11 10V17L12.5 15.5L14 18L15 17.5L13.8 15H16Z" fill="#fff" stroke="#222" stroke-width=".7"/><path d="M0 5H2" stroke="#aaa"/></svg>
<svg style="position:absolute;left:794px;top:78px;" width="8" height="9" viewBox="0 0 8 9"><path d="M1 1L4 3.5L7 1M1 5L4 7.5L7 5" stroke="#e0e0e0" stroke-width="1.3" fill="none"/></svg>
<svg style="position:absolute;left:794px;top:95px;" width="7" height="4" viewBox="0 0 7 4"><path d="M0 0L3.5 4L7 0Z" fill="#e8e8e8"/></svg>
<svg style="position:absolute;left:818px;top:81px;" width="21" height="14" viewBox="0 0 21 14"><path d="M1 2L8 12M8 2L1 12M13 2L20 12M20 2L13 12" stroke="#f0a0a0" stroke-width="1.5"/><path d="M10.5 0V14" stroke="#999" stroke-width="1.2"/></svg>
<svg style="position:absolute;left:846px;top:78px;" width="8" height="9" viewBox="0 0 8 9"><path d="M1 1L4 3.5L7 1M1 5L4 7.5L7 5" stroke="#e0e0e0" stroke-width="1.3" fill="none"/></svg>
<svg style="position:absolute;left:846px;top:95px;" width="7" height="4" viewBox="0 0 7 4"><path d="M0 0L3.5 4L7 0Z" fill="#e8e8e8"/></svg>
<div style="left:865px;top:76px;width:24px;height:24px;background:#4a4a4a;border:1px solid #d8d8d8"></div>
<svg style="position:absolute;left:871px;top:82px;" width="12" height="12" viewBox="0 0 12 12"><path d="M1 1L11 11M11 1L1 11" stroke="#f08080" stroke-width="1.4"/></svg>
<div class="t" style="left:898px;top:81px;color:#70c070;font-size:12px">Y</div>
<div class="t" style="left:924px;top:81px;color:#7080e0;font-size:12px">Z</div>
<div style="left:941px;top:76px;width:70px;height:24px;background:#606060;border:1px solid #484848;border-radius:2px"></div>
<div class="t" style="left:945px;top:81px;font-size:13px;color:#e4ecf4">12.5%</div>
<div style="left:993px;top:78px;width:16px;height:20px;background:#444;border:1px solid #3a3a3a"></div>
<svg style="position:absolute;left:1017px;top:79px;" width="10" height="18" viewBox="0 0 10 18"><path d="M5 0L10 6H7V17H3V6H0Z" fill="#2a2a2a"/></svg>
<svg style="position:absolute;left:1043px;top:78px;" width="8" height="9" viewBox="0 0 8 9"><path d="M1 1L4 3.5L7 1M1 5L4 7.5L7 5" stroke="#e0e0e0" stroke-width="1.3" fill="none"/></svg>
<svg style="position:absolute;left:1043px;top:95px;" width="7" height="4" viewBox="0 0 7 4"><path d="M0 0L3.5 4L7 0Z" fill="#e8e8e8"/></svg>
<svg style="position:absolute;left:1068px;top:79px;" width="19" height="18" viewBox="0 0 19 18"><path d="M15 4A7 7 0 1 0 16 12" stroke="#111" stroke-width="3" fill="none"/><path d="M15 4A7 7 0 1 0 16 12" stroke="#eee" stroke-width="1.5" fill="none"/><path d="M13 1L18 4L13 7Z" fill="#eee" stroke="#111" stroke-width=".6"/><text x="8.5" y="13.5" font-family="Liberation Sans" font-size="10" font-weight="bold" fill="#f08080" text-anchor="middle" stroke="#222" stroke-width=".3">X</text></svg>
<svg style="position:absolute;left:1094px;top:79px;" width="19" height="18" viewBox="0 0 19 18"><path d="M15 4A7 7 0 1 0 16 12" stroke="#111" stroke-width="3" fill="none"/><path d="M15 4A7 7 0 1 0 16 12" stroke="#eee" stroke-width="1.5" fill="none"/><path d="M13 1L18 4L13 7Z" fill="#eee" stroke="#111" stroke-width=".6"/><text x="8.5" y="13.5" font-family="Liberation Sans" font-size="10" font-weight="bold" fill="#70c070" text-anchor="middle" stroke="#222" stroke-width=".3">Y</text></svg>
<svg style="position:absolute;left:1120px;top:79px;" width="19" height="18" viewBox="0 0 19 18"><path d="M15 4A7 7 0 1 0 16 12" stroke="#111" stroke-width="3" fill="none"/><path d="M15 4A7 7 0 1 0 16 12" stroke="#eee" stroke-width="1.5" fill="none"/><path d="M13 1L18 4L13 7Z" fill="#eee" stroke="#111" stroke-width=".6"/><text x="8.5" y="13.5" font-family="Liberation Sans" font-size="10" font-weight="bold" fill="#7080e0" text-anchor="middle" stroke="#222" stroke-width=".3">Z</text></svg>
<div style="left:1142px;top:76px;width:63px;height:24px;background:#5e5e5e;border:1px solid #484848;border-radius:2px 0 0 2px"></div>
<div class="t" style="left:1146px;top:81px;font-size:12.5px;color:#e4ecf4">90</div>
<div style="left:1205px;top:76px;width:119px;height:24px;background:#5e5e5e;border:1px solid #484848;border-radius:0 2px 2px 0"></div>
<div class="t" style="left:1208px;top:81px;font-size:12.5px;color:#e4ecf4">Median Point</div>
<div style="left:1306px;top:78px;width:16px;height:20px;background:#444;border:1px solid #3a3a3a"></div>
<svg style="position:absolute;left:1326px;top:93px;" width="7" height="4" viewBox="0 0 7 4"><path d="M0 0L3.5 4L7 0Z" fill="#e8e8e8"/></svg>
<svg style="position:absolute;left:1350px;top:81px;" width="15" height="15" viewBox="0 0 15 15"><path d="M1 1L14 14M14 1L1 14" stroke="#111" stroke-width="1.3"/></svg>
<div style="left:1372px;top:79px;width:1px;height:21px;background:#4a4a4a;border-right:1px solid #606060;width:2px"></div>
<svg style="position:absolute;left:1378px;top:79px;" width="19" height="19" viewBox="0 0 19 19"><path d="M2 5L9 1L16 5M2 13L9 17" stroke="#30c030" stroke-width="1.6" stroke-dasharray="1.5 1.2" fill="none"/><path d="M2.5 5.425L9 1.8499999999999996L15.5 5.425L9 9Z" fill="#ffd0d4" stroke="#c07080" stroke-width="0.7"/><path d="M2.5 5.425L9 9L9 15.7925L2.5 12.217500000000001Z" fill="#f09aa4" stroke="#c07080" stroke-width="0.7"/><path d="M15.5 5.425L9 9L9 15.7925L15.5 12.217500000000001Z" fill="#e88894" stroke="#c07080" stroke-width="0.7"/><path d="M12 14H18M15 11V17" stroke="#0a6a2a" stroke-width="2.6"/></svg>
<svg style="position:absolute;left:1399px;top:79px;" width="19" height="19" viewBox="0 0 19 19"><path d="M2 5L9 1L16 5M2 13L9 17" stroke="#30c030" stroke-width="1.6" stroke-dasharray="1.5 1.2" fill="none"/><path d="M2.5 5.425L9 1.8499999999999996L15.5 5.425L9 9Z" fill="#ffd0d4" stroke="#c07080" stroke-width="0.7"/><path d="M2.5 5.425L9 9L9 15.7925L2.5 12.217500000000001Z" fill="#f09aa4" stroke="#c07080" stroke-width="0.7"/><path d="M15.5 5.425L9 9L9 15.7925L15.5 12.217500000000001Z" fill="#e88894" stroke="#c07080" stroke-width="0.7"/><path d="M12 14H18" stroke="#0a6a2a" stroke-width="2.6"/></svg>
<div style="left:1422px;top:77px;width:1px;height:23px;background:#4a4a4a;border-right:1px solid #606060;width:2px"></div>
<svg style="position:absolute;left:1426px;top:79px;" width="17" height="19" viewBox="0 0 17 19"><g opacity="1"><path d="M2 3.8L6 1.5999999999999996L10 3.8L6 6Z" fill="#f4f4f4" stroke="#333" stroke-width="0.8"/><path d="M2 3.8L6 6L6 10.18L2 7.98Z" fill="#f4f4f4" stroke="#333" stroke-width="0.8"/><path d="M10 3.8L6 6L6 10.18L10 7.98Z" fill="#f4f4f4" stroke="#333" stroke-width="0.8"/><path d="M8 5.8L12 3.5999999999999996L16 5.8L12 8Z" fill="#f4f4f4" stroke="#333" stroke-width="0.8"/><path d="M8 5.8L12 8L12 12.18L8 9.98Z" fill="#f4f4f4" stroke="#333" stroke-width="0.8"/><path d="M16 5.8L12 8L12 12.18L16 9.98Z" fill="#f4f4f4" stroke="#333" stroke-width="0.8"/><path d="M5 10.8L9 8.6L13 10.8L9 13Z" fill="#f4f4f4" stroke="#333" stroke-width="0.8"/><path d="M5 10.8L9 13L9 17.18L5 14.98Z" fill="#f4f4f4" stroke="#333" stroke-width="0.8"/><path d="M13 10.8L9 13L9 17.18L13 14.98Z" fill="#f4f4f4" stroke="#333" stroke-width="0.8"/></g><circle cx="1.5" cy="14" r="1.3" fill="#0a6a2a"/></svg>
<svg style="position:absolute;left:1448px;top:79px;" width="17" height="19" viewBox="0 0 17 19"><g opacity="0.85"><path d="M2 3.8L6 1.5999999999999996L10 3.8L6 6Z" fill="#d8d8d8" stroke="#333" stroke-width="0.8"/><path d="M2 3.8L6 6L6 10.18L2 7.98Z" fill="#d8d8d8" stroke="#333" stroke-width="0.8"/><path d="M10 3.8L6 6L6 10.18L10 7.98Z" fill="#d8d8d8" stroke="#333" stroke-width="0.8"/><path d="M8 5.8L12 3.5999999999999996L16 5.8L12 8Z" fill="#d8d8d8" stroke="#333" stroke-width="0.8"/><path d="M8 5.8L12 8L12 12.18L8 9.98Z" fill="#d8d8d8" stroke="#333" stroke-width="0.8"/><path d="M16 5.8L12 8L12 12.18L16 9.98Z" fill="#d8d8d8" stroke="#333" stroke-width="0.8"/><path d="M5 10.8L9 8.6L13 10.8L9 13Z" fill="#d8d8d8" stroke="#333" stroke-width="0.8"/><path d="M5 10.8L9 13L9 17.18L5 14.98Z" fill="#d8d8d8" stroke="#333" stroke-width="0.8"/><path d="M13 10.8L9 13L9 17.18L13 14.98Z" fill="#d8d8d8" stroke="#333" stroke-width="0.8"/></g></svg>
<svg style="position:absolute;left:1470px;top:79px;" width="17" height="19" viewBox="0 0 17 19"><g opacity="0.6"><path d="M2 3.8L6 1.5999999999999996L10 3.8L6 6Z" fill="none" stroke="#c8c8c8" stroke-width="0.8"/><path d="M2 3.8L6 6L6 10.18L2 7.98Z" fill="none" stroke="#c8c8c8" stroke-width="0.8"/><path d="M10 3.8L6 6L6 10.18L10 7.98Z" fill="none" stroke="#c8c8c8" stroke-width="0.8"/><path d="M8 5.8L12 3.5999999999999996L16 5.8L12 8Z" fill="none" stroke="#c8c8c8" stroke-width="0.8"/><path d="M8 5.8L12 8L12 12.18L8 9.98Z" fill="none" stroke="#c8c8c8" stroke-width="0.8"/><path d="M16 5.8L12 8L12 12.18L16 9.98Z" fill="none" stroke="#c8c8c8" stroke-width="0.8"/><path d="M5 10.8L9 8.6L13 10.8L9 13Z" fill="none" stroke="#c8c8c8" stroke-width="0.8"/><path d="M5 10.8L9 13L9 17.18L5 14.98Z" fill="none" stroke="#c8c8c8" stroke-width="0.8"/><path d="M13 10.8L9 13L9 17.18L13 14.98Z" fill="none" stroke="#c8c8c8" stroke-width="0.8"/></g></svg>
<div style="left:1492px;top:77px;width:1px;height:23px;background:#4a4a4a;border-right:1px solid #606060;width:2px"></div>
<svg style="position:absolute;left:1500px;top:79px;" width="17" height="19" viewBox="0 0 17 19"><path d="M2 3.8L6 1.5999999999999996L10 3.8L6 6Z" fill="#d8d8d8" stroke="#444" stroke-width="0.8"/><path d="M2 3.8L6 6L6 10.18L2 7.98Z" fill="#d8d8d8" stroke="#444" stroke-width="0.8"/><path d="M10 3.8L6 6L6 10.18L10 7.98Z" fill="#d8d8d8" stroke="#444" stroke-width="0.8"/><path d="M8 4.8L12 2.5999999999999996L16 4.8L12 7Z" fill="#d8d8d8" stroke="#444" stroke-width="0.8"/><path d="M8 4.8L12 7L12 11.18L8 8.98Z" fill="#d8d8d8" stroke="#444" stroke-width="0.8"/><path d="M16 4.8L12 7L12 11.18L16 8.98Z" fill="#d8d8d8" stroke="#444" stroke-width="0.8"/><path d="M5 10.8L9 8.6L13 10.8L9 13Z" fill="#f06060" stroke="#eee" stroke-width="0.8"/><path d="M5 10.8L9 13L9 17.18L5 14.98Z" fill="#d82828" stroke="#eee" stroke-width="0.8"/><path d="M13 10.8L9 13L9 17.18L13 14.98Z" fill="#c82020" stroke="#eee" stroke-width="0.8"/></svg>
<svg style="position:absolute;left:1520px;top:79px;" width="17" height="19" viewBox="0 0 17 19"><path d="M2 3.8L6 1.5999999999999996L10 3.8L6 6Z" fill="none" stroke="#c8c8c8" stroke-width="0.8"/><path d="M2 3.8L6 6L6 10.18L2 7.98Z" fill="none" stroke="#c8c8c8" stroke-width="0.8"/><path d="M10 3.8L6 6L6 10.18L10 7.98Z" fill="none" stroke="#c8c8c8" stroke-width="0.8"/><path d="M8 4.8L12 2.5999999999999996L16 4.8L12 7Z" fill="none" stroke="#c8c8c8" stroke-width="0.8"/><path d="M8 4.8L12 7L12 11.18L8 8.98Z" fill="none" stroke="#c8c8c8" stroke-width="0.8"/><path d="M16 4.8L12 7L12 11.18L16 8.98Z" fill="none" stroke="#c8c8c8" stroke-width="0.8"/><path d="M5 10.8L9 8.6L13 10.8L9 13Z" fill="#f06060" stroke="#eee" stroke-width="0.8"/><path d="M5 10.8L9 13L9 17.18L5 14.98Z" fill="#d82828" stroke="#eee" stroke-width="0.8"/><path d="M13 10.8L9 13L9 17.18L13 14.98Z" fill="#c82020" stroke="#eee" stroke-width="0.8"/></svg>
<svg style="position:absolute;left:1542px;top:95px;" width="7" height="4" viewBox="0 0 7 4"><path d="M0 0L3.5 4L7 0Z" fill="#e8e8e8"/></svg>
<div style="left:512px;top:109px;width:2px;height:27px;background:repeating-linear-gradient(#2e2e2e 0 2px,transparent 2px 4px)"></div>
<div style="left:627px;top:109px;width:2px;height:27px;background:repeating-linear-gradient(#2e2e2e 0 2px,transparent 2px 4px)"></div>
<div style="left:744px;top:109px;width:2px;height:27px;background:repeating-linear-gradient(#2e2e2e 0 2px,transparent 2px 4px)"></div>
<div style="left:802px;top:109px;width:2px;height:27px;background:repeating-linear-gradient(#2e2e2e 0 2px,transparent 2px 4px)"></div>
<div style="left:1008px;top:109px;width:2px;height:27px;background:repeating-linear-gradient(#2e2e2e 0 2px,transparent 2px 4px)"></div>
<div style="left:1108px;top:109px;width:2px;height:27px;background:repeating-linear-gradient(#2e2e2e 0 2px,transparent 2px 4px)"></div>
<div style="left:1408px;top:109px;width:2px;height:27px;background:repeating-linear-gradient(#2e2e2e 0 2px,transparent 2px 4px)"></div>
<svg style="position:absolute;left:520px;top:111px;" width="17" height="18" viewBox="0 0 17 18"><rect x="5" y="2" width="12" height="12" fill="#f8f8ff" stroke="#2070d0" stroke-width="1.5"/><path d="M8 11L14 5M11 5H14V8" stroke="#2050c0" stroke-width="1.5" fill="none"/><rect x="1" y="10" width="7" height="7" fill="#fff" stroke="#e04020" stroke-dasharray="1.5 1"/></svg>
<div style="left:545px;top:110px;width:20px;height:20px;background:#4a4a4a;border:1px solid #d8d8d8"></div>
<svg style="position:absolute;left:547px;top:112px;" width="16" height="16" viewBox="0 0 16 16"><rect x="2" y="1" width="13" height="13" fill="#f0f4ff" stroke="#2a60c0"/><text x="8.5" y="12" font-family="Liberation Sans" font-size="12" font-weight="bold" fill="#1840c0" text-anchor="middle">X</text><rect x="0" y="9" width="7" height="6" fill="#e85030"/></svg>
<div style="left:567px;top:110px;width:20px;height:20px;background:#4a4a4a;border:1px solid #d8d8d8"></div>
<svg style="position:absolute;left:569px;top:112px;" width="16" height="16" viewBox="0 0 16 16"><rect x="2" y="1" width="13" height="13" fill="#f0f4ff" stroke="#2a60c0"/><text x="8.5" y="12" font-family="Liberation Sans" font-size="12" font-weight="bold" fill="#1840c0" text-anchor="middle">Y</text><rect x="0" y="9" width="7" height="6" fill="#e85030"/></svg>
<div style="left:589px;top:110px;width:20px;height:20px;background:#4a4a4a;border:1px solid #d8d8d8"></div>
<svg style="position:absolute;left:591px;top:112px;" width="16" height="16" viewBox="0 0 16 16"><rect x="2" y="1" width="13" height="13" fill="#f0f4ff" stroke="#2a60c0"/><text x="8.5" y="12" font-family="Liberation Sans" font-size="12" font-weight="bold" fill="#1840c0" text-anchor="middle">Z</text><rect x="0" y="9" width="7" height="6" fill="#e85030"/></svg>
<svg style="position:absolute;left:613px;top:130px;" width="7" height="4" viewBox="0 0 7 4"><path d="M0 0L3.5 4L7 0Z" fill="#e8e8e8"/></svg>
<div style="left:633px;top:108px;width:35px;height:25px;background:#636363;border:1px solid #3e3e3e"></div>
<div style="left:668px;top:108px;width:34px;height:25px;background:#636363;border:1px solid #3e3e3e"></div>
<svg style="position:absolute;left:728px;top:107px;" width="8" height="9" viewBox="0 0 8 9"><path d="M1 1L4 3.5L7 1M1 5L4 7.5L7 5" stroke="#e0e0e0" stroke-width="1.3" fill="none"/></svg>
<svg style="position:absolute;left:728px;top:130px;" width="7" height="4" viewBox="0 0 7 4"><path d="M0 0L3.5 4L7 0Z" fill="#e8e8e8"/></svg>
<div style="left:749px;top:108px;width:35px;height:25px;background:#636363;border:1px solid #3e3e3e"></div>
<svg style="position:absolute;left:786px;top:107px;" width="8" height="9" viewBox="0 0 8 9"><path d="M1 1L4 3.5L7 1M1 5L4 7.5L7 5" stroke="#e0e0e0" stroke-width="1.3" fill="none"/></svg>
<svg style="position:absolute;left:786px;top:130px;" width="7" height="4" viewBox="0 0 7 4"><path d="M0 0L3.5 4L7 0Z" fill="#e8e8e8"/></svg>
<svg style="position:absolute;left:809px;top:113px;" width="27" height="16" viewBox="0 0 27 16"><path d="M1.5 9Q13 1 25.5 8Q14 16.5 1.5 9Z" fill="#f2f2f2"/><path d="M2 11Q14 17 25 9" stroke="#9a9a9a" stroke-width="1.5" fill="none"/><circle cx="13.5" cy="7.5" r="4.3" fill="#9a9a9a"/><circle cx="13.5" cy="7.5" r="1.6" fill="#1a1a1a"/><path d="M1 9Q6 3 13.5 2.5Q21 2.5 26 8" stroke="#1a1a1a" stroke-width="2.2" fill="none"/><path d="M4 5Q13 -1 24 4" stroke="#555" stroke-width="1" fill="none"/></svg>
<svg style="position:absolute;left:840px;top:113px;" width="27" height="16" viewBox="0 0 27 16"><path d="M1.5 9Q13 1 25.5 8Q14 16.5 1.5 9Z" fill="#4a4a4a"/><path d="M1 9Q6 3 13.5 2.5Q21 2.5 26 8" stroke="#1a1a1a" stroke-width="2.2" fill="none"/><path d="M3 10Q13 6 24 9" stroke="#2a2a2a" stroke-width="1.5" fill="none"/><path d="M3 12Q14 17 25 10" stroke="#aaa" stroke-width="1.5" fill="none"/></svg>
<svg style="position:absolute;left:870px;top:113px;" width="27" height="16" viewBox="0 0 27 16"><path d="M1.5 9Q13 1 25.5 8Q14 16.5 1.5 9Z" fill="#f2f2f2"/><path d="M2 11Q14 17 25 9" stroke="#9a9a9a" stroke-width="1.5" fill="none"/><circle cx="13.5" cy="7.5" r="4.3" fill="#e8900c"/><circle cx="13.5" cy="7.5" r="1.6" fill="#1a1a1a"/><path d="M1 9Q6 3 13.5 2.5Q21 2.5 26 8" stroke="#1a1a1a" stroke-width="2.2" fill="none"/><path d="M4 5Q13 -1 24 4" stroke="#555" stroke-width="1" fill="none"/></svg>
<svg style="position:absolute;left:902px;top:110px;" width="24" height="23" viewBox="0 0 24 23"><path d="M11.5 11V6.5A5.5 5.5 0 0 1 22.5 6.5V12" stroke="#bdbdbd" stroke-width="2" fill="none"/><rect x="1" y="10" width="12.5" height="12" rx="1" fill="#d89a28"/><rect x="1" y="10" width="12.5" height="2" fill="#f0b848"/><path d="M3.5 12V21M6 12V21M8.5 12V21M11 12V21" stroke="#b07818" stroke-width=".8"/></svg>
<svg style="position:absolute;left:936px;top:110px;" width="16" height="23" viewBox="0 0 16 23"><path d="M2.5 10V6A5.5 5.5 0 0 1 13.5 6V10" stroke="#bdbdbd" stroke-width="2" fill="none"/><rect x="1" y="10" width="14" height="12" rx="1" fill="#d89a28"/><rect x="1" y="10" width="14" height="2" fill="#f0b848"/><path d="M4 12V21M6.5 12V21M9 12V21M11.5 12V21" stroke="#b07818" stroke-width=".8"/></svg>
<svg style="position:absolute;left:963px;top:108px;" width="25" height="25" viewBox="0 0 25 25"><g stroke="#111" stroke-width="1.6" fill="#fff"><rect x="3" y="2" width="16" height="7" rx="1"/><rect x="20" y="1" width="4" height="8" rx="1"/><rect x="1" y="11" width="5" height="9" rx="1"/><rect x="9" y="11" width="15" height="13" rx="1"/><rect x="4" y="21" width="3" height="3"/></g><path d="M6 5H9M12 4H15M12 14H14M12 17L15 19M19 14V21" stroke="#111" stroke-width="1.2"/></svg>
<svg style="position:absolute;left:993px;top:130px;" width="7" height="4" viewBox="0 0 7 4"><path d="M0 0L3.5 4L7 0Z" fill="#e8e8e8"/></svg>
<svg style="position:absolute;left:1016px;top:110px;" width="21" height="22" viewBox="0 0 21 22"><rect x="1" y="3" width="5" height="3" rx="1.2" fill="#f4f4f4" stroke="#111" stroke-width="1"/><rect x="7" y="3" width="5" height="3" rx="1.2" fill="#f4f4f4" stroke="#111" stroke-width="1"/><rect x="0" y="8" width="5" height="3" rx="1.2" fill="#f4f4f4" stroke="#111" stroke-width="1"/><rect x="5" y="8" width="5" height="3" rx="1.2" fill="#f4f4f4" stroke="#111" stroke-width="1"/><rect x="1" y="13" width="5" height="3" rx="1.2" fill="#f4f4f4" stroke="#111" stroke-width="1"/><rect x="7" y="13" width="5" height="3" rx="1.2" fill="#f4f4f4" stroke="#111" stroke-width="1"/><rect x="13" y="13" width="5" height="3" rx="1.2" fill="#f4f4f4" stroke="#111" stroke-width="1"/><rect x="3" y="18" width="5" height="3" rx="1.2" fill="#f4f4f4" stroke="#111" stroke-width="1"/><rect x="9" y="18" width="5" height="3" rx="1.2" fill="#f4f4f4" stroke="#111" stroke-width="1"/><rect x="15" y="18" width="5" height="3" rx="1.2" fill="#f4f4f4" stroke="#111" stroke-width="1"/><path d="M20.0,8.0 L17.4,9.8 L17.9,12.9 L14.8,12.4 L13.0,15.0 L11.2,12.4 L8.1,12.9 L8.6,9.8 L6.0,8.0 L8.6,6.2 L8.1,3.1 L11.2,3.6 L13.0,1.0 L14.8,3.6 L17.9,3.1 L17.4,6.2Z" fill="#f0a010" stroke="#222" stroke-width=".8"/><circle cx="13" cy="8" r="3.3" fill="#2a2a2a"/><circle cx="13" cy="8.2" r="1.8" fill="#ddd"/></svg>
<svg style="position:absolute;left:1044px;top:110px;" width="16" height="22" viewBox="0 0 16 22"><path d="M1 6H6V19H13V10" fill="#fafafa" stroke="#111" stroke-width="1.6"/><rect x="1" y="6" width="12" height="13" fill="#fafafa" stroke="#111" stroke-width="1.6"/><path d="M15.5,7.0 L13.2,8.7 L13.6,11.6 L10.7,11.2 L9.0,13.5 L7.3,11.2 L4.4,11.6 L4.8,8.7 L2.5,7.0 L4.8,5.3 L4.4,2.4 L7.3,2.8 L9.0,0.5 L10.7,2.8 L13.6,2.4 L13.2,5.3Z" fill="#f0a010" stroke="#222" stroke-width=".8"/><circle cx="9" cy="7" r="3" fill="#2a2a2a"/><circle cx="9" cy="7.3" r="1.7" fill="#eee"/></svg>
<svg style="position:absolute;left:1067px;top:111px;" width="21" height="20" viewBox="0 0 21 20"><rect x="0" y="0" width="20" height="19" rx="1" fill="#9a9a9a" opacity=".55"/><rect x="1" y="3" width="5" height="3" rx="1.2" fill="#e4e4e4" stroke="#555" stroke-width="1"/><rect x="7" y="3" width="5" height="3" rx="1.2" fill="#e4e4e4" stroke="#555" stroke-width="1"/><rect x="0" y="8" width="5" height="3" rx="1.2" fill="#e4e4e4" stroke="#555" stroke-width="1"/><rect x="5" y="8" width="5" height="3" rx="1.2" fill="#e4e4e4" stroke="#555" stroke-width="1"/><rect x="1" y="13" width="5" height="3" rx="1.2" fill="#e4e4e4" stroke="#555" stroke-width="1"/><rect x="7" y="13" width="5" height="3" rx="1.2" fill="#e4e4e4" stroke="#555" stroke-width="1"/><rect x="13" y="13" width="5" height="3" rx="1.2" fill="#e4e4e4" stroke="#555" stroke-width="1"/><rect x="3" y="18" width="5" height="3" rx="1.2" fill="#e4e4e4" stroke="#555" stroke-width="1"/><rect x="9" y="18" width="5" height="3" rx="1.2" fill="#e4e4e4" stroke="#555" stroke-width="1"/><rect x="15" y="18" width="5" height="3" rx="1.2" fill="#e4e4e4" stroke="#555" stroke-width="1"/><path d="M8 6L14 10L8 14Z" fill="#bbb" opacity=".8"/></svg>
<svg style="position:absolute;left:1092px;top:130px;" width="7" height="4" viewBox="0 0 7 4"><path d="M0 0L3.5 4L7 0Z" fill="#e8e8e8"/></svg>
<svg style="position:absolute;left:1116px;top:109px;" width="16" height="20" viewBox="0 0 16 20"><rect x="0.5" y="2" width="6" height="6" fill="#f8e040" stroke="#e83010" stroke-width="1.2"/><rect x="8.5" y="10" width="6" height="6" fill="#f8e040" stroke="#e83010" stroke-width="1.2"/><path d="M2 5L5 5M3.5 3.5V6.5M10 13H13" stroke="#4050a0" stroke-width=".8"/><text x="4" y="17" font-family="Liberation Sans" font-size="9" font-weight="bold" fill="#1a80e0" text-anchor="middle">X</text><path d="M9 3H13V6" stroke="#7080a0" fill="none"/></svg>
<svg style="position:absolute;left:1139px;top:109px;" width="16" height="20" viewBox="0 0 16 20"><rect x="0.5" y="2" width="6" height="6" fill="#f8e040" stroke="#e83010" stroke-width="1.2"/><rect x="8.5" y="10" width="6" height="6" fill="#f8e040" stroke="#e83010" stroke-width="1.2"/><path d="M2 5L5 5M3.5 3.5V6.5M10 13H13" stroke="#4050a0" stroke-width=".8"/><text x="4" y="17" font-family="Liberation Sans" font-size="9" font-weight="bold" fill="#1a80e0" text-anchor="middle">Y</text><path d="M9 3H13V6" stroke="#7080a0" fill="none"/></svg>
<div style="left:1163px;top:108px;width:49px;height:25px;background:#636363;border:1px solid #3e3e3e"></div>
<div style="left:1212px;top:108px;width:49px;height:25px;background:#636363;border:1px solid #3e3e3e"></div>
<svg style="position:absolute;left:1265px;top:111px;" width="15" height="16" viewBox="0 0 15 16"><path d="M3 1H14V13L12 15H1V3Z" fill="#e83a10"/><rect x="1.5" y="3" width="10.5" height="11.5" fill="#e4f6fa"/><path d="M4 4V8M3 5L4 3.5L5 5M6 11H10M9 10L10.5 11L9 12" stroke="#3040a0" stroke-width="1" fill="none"/><circle cx="4" cy="11" r="1.8" fill="#d8d020" stroke="#608020" stroke-width=".6"/></svg>
<div style="left:1289px;top:108px;width:80px;height:25px;background:#636363;border:1px solid #3e3e3e"></div>
<div class="t" style="left:1293px;top:113px;font-size:12.5px;color:#e4ecf4">45</div>
<svg style="position:absolute;left:1371px;top:111px;" width="15" height="16" viewBox="0 0 15 16"><path d="M3 1H14V13L12 15H1V3Z" fill="#e83a10"/><rect x="1.5" y="3" width="10.5" height="11.5" fill="#e4f6fa"/><path d="M3.5 8A3.5 3.5 0 0 1 10 7M10 9.5A3.5 3.5 0 0 1 3.5 10.5" stroke="#3a50b0" stroke-width="1.2" fill="none"/><path d="M9 5.5L10.5 7.5L11.5 5Z M4.5 12L3 10L2 12.5Z" fill="#3a50b0"/></svg>
<svg style="position:absolute;left:1393px;top:130px;" width="7" height="4" viewBox="0 0 7 4"><path d="M0 0L3.5 4L7 0Z" fill="#e8e8e8"/></svg>
<div style="left:1413px;top:108px;width:34px;height:25px;background:#636363;border:1px solid #3e3e3e"></div>
<div style="left:1447px;top:108px;width:35px;height:25px;background:#636363;border:1px solid #3e3e3e"></div>
<div style="left:1482px;top:108px;width:35px;height:25px;background:#636363;border:1px solid #3e3e3e"></div>
<svg style="position:absolute;left:1520px;top:112px;" width="16" height="18" viewBox="0 0 16 18"><rect x="1.5" y="6.5" width="9" height="10" fill="#666" stroke="#111" stroke-width="1.4"/><path d="M2.5 3H10.5M2.5 3L4.5 1.5V4.5ZM10.5 3L8.5 1.5V4.5ZM14 7V15M14 7L12.5 9H15.5ZM14 15L12.5 13H15.5Z" stroke="#111" stroke-width="1.1" fill="#111"/></svg>
<svg style="position:absolute;left:1542px;top:130px;" width="7" height="4" viewBox="0 0 7 4"><path d="M0 0L3.5 4L7 0Z" fill="#e8e8e8"/></svg>
<div style="left:505px;top:138px;width:1049px;height:898px;background:#8a8a8a"></div>
<div style="left:507px;top:138px;width:1044px;height:896px;background:#000"></div>
<div style="left:1551px;top:47px;width:2px;height:989px;background:#e8e8e8"></div>
<div style="left:1553px;top:47px;width:1px;height:989px;background:#444"></div>
<div style="left:505px;top:1034px;width:1049px;height:2px;background:#e8e8e8"></div>
<div style="left:632px;top:138px;width:1px;height:896px;background:#3e3e3e"></div>
<div style="left:830px;top:138px;width:1px;height:896px;background:#3e3e3e"></div>
<div style="left:1028px;top:138px;width:1px;height:896px;background:#3e3e3e"></div>
<div style="left:1226px;top:138px;width:1px;height:896px;background:#3e3e3e"></div>
<div style="left:1424px;top:138px;width:1px;height:896px;background:#3e3e3e"></div>
<div style="left:507px;top:189px;width:1044px;height:1px;background:#363636"></div>
<div style="left:507px;top:387px;width:1044px;height:1px;background:#363636"></div>
<div style="left:507px;top:585px;width:1044px;height:1px;background:#363636"></div>
<div style="left:507px;top:783px;width:1044px;height:1px;background:#363636"></div>
<div style="left:507px;top:981px;width:1044px;height:1px;background:#363636"></div>
<div style="left:513px;top:138px;width:1px;height:5px;background:#d0d0d0"></div>
<div style="left:553px;top:138px;width:1px;height:5px;background:#d0d0d0"></div>
<div style="left:592px;top:138px;width:1px;height:5px;background:#d0d0d0"></div>
<div style="left:672px;top:138px;width:1px;height:5px;background:#d0d0d0"></div>
<div style="left:711px;top:138px;width:1px;height:5px;background:#d0d0d0"></div>
<div style="left:751px;top:138px;width:1px;height:5px;background:#d0d0d0"></div>
<div style="left:790px;top:138px;width:1px;height:5px;background:#d0d0d0"></div>
<div style="left:870px;top:138px;width:1px;height:5px;background:#d0d0d0"></div>
<div style="left:909px;top:138px;width:1px;height:5px;background:#d0d0d0"></div>
<div style="left:949px;top:138px;width:1px;height:5px;background:#d0d0d0"></div>
<div style="left:988px;top:138px;width:1px;height:5px;background:#d0d0d0"></div>
<div style="left:1068px;top:138px;width:1px;height:5px;background:#d0d0d0"></div>
<div style="left:1107px;top:138px;width:1px;height:5px;background:#d0d0d0"></div>
<div style="left:1147px;top:138px;width:1px;height:5px;background:#d0d0d0"></div>
<div style="left:1186px;top:138px;width:1px;height:5px;background:#d0d0d0"></div>
<div style="left:1266px;top:138px;width:1px;height:5px;background:#d0d0d0"></div>
<div style="left:1305px;top:138px;width:1px;height:5px;background:#d0d0d0"></div>
<div style="left:1345px;top:138px;width:1px;height:5px;background:#d0d0d0"></div>
<div style="left:1384px;top:138px;width:1px;height:5px;background:#d0d0d0"></div>
<div style="left:1464px;top:138px;width:1px;height:5px;background:#d0d0d0"></div>
<div style="left:1503px;top:138px;width:1px;height:5px;background:#d0d0d0"></div>
<div style="left:1543px;top:138px;width:1px;height:5px;background:#d0d0d0"></div>
<div style="left:507px;top:149px;width:5px;height:1px;background:#d0d0d0"></div>
<div style="left:507px;top:229px;width:5px;height:1px;background:#d0d0d0"></div>
<div style="left:507px;top:268px;width:5px;height:1px;background:#d0d0d0"></div>
<div style="left:507px;top:308px;width:5px;height:1px;background:#d0d0d0"></div>
<div style="left:507px;top:347px;width:5px;height:1px;background:#d0d0d0"></div>
<div style="left:507px;top:427px;width:5px;height:1px;background:#d0d0d0"></div>
<div style="left:507px;top:466px;width:5px;height:1px;background:#d0d0d0"></div>
<div style="left:507px;top:506px;width:5px;height:1px;background:#d0d0d0"></div>
<div style="left:507px;top:545px;width:5px;height:1px;background:#d0d0d0"></div>
<div style="left:507px;top:625px;width:5px;height:1px;background:#d0d0d0"></div>
<div style="left:507px;top:664px;width:5px;height:1px;background:#d0d0d0"></div>
<div style="left:507px;top:704px;width:5px;height:1px;background:#d0d0d0"></div>
<div style="left:507px;top:743px;width:5px;height:1px;background:#d0d0d0"></div>
<div style="left:507px;top:823px;width:5px;height:1px;background:#d0d0d0"></div>
<div style="left:507px;top:862px;width:5px;height:1px;background:#d0d0d0"></div>
<div style="left:507px;top:902px;width:5px;height:1px;background:#d0d0d0"></div>
<div style="left:507px;top:941px;width:5px;height:1px;background:#d0d0d0"></div>
<div style="left:507px;top:1021px;width:5px;height:1px;background:#d0d0d0"></div>
<div class="t" style="left:634px;top:137px;font-size:11px;color:#d8d8d8;-webkit-text-stroke:0">&minus;2</div>
<div class="t" style="left:832px;top:137px;font-size:11px;color:#d8d8d8;-webkit-text-stroke:0">&minus;1</div>
<div class="t" style="left:1030px;top:137px;font-size:11px;color:#d8d8d8;-webkit-text-stroke:0">0</div>
<div class="t" style="left:1228px;top:137px;font-size:11px;color:#d8d8d8;-webkit-text-stroke:0">1</div>
<div class="t" style="left:1426px;top:137px;font-size:11px;color:#d8d8d8;-webkit-text-stroke:0">2</div>
<div class="t" style="left:508px;top:179px;font-size:11px;color:#d8d8d8;-webkit-text-stroke:0">2</div>
<div class="t" style="left:508px;top:377px;font-size:11px;color:#d8d8d8;-webkit-text-stroke:0">1</div>
<div class="t" style="left:508px;top:575px;font-size:11px;color:#d8d8d8;-webkit-text-stroke:0">0</div>
<div class="t" style="left:508px;top:773px;font-size:11px;color:#d8d8d8;-webkit-text-stroke:0">&minus;1</div>
<div class="t" style="left:508px;top:971px;font-size:11px;color:#d8d8d8;-webkit-text-stroke:0">&minus;2</div>
<div class="t" style="left:541px;top:147px;font-size:11px;color:#8a0a8a">XY&nbsp; Top</div>
<svg style="position:absolute;left:1010px;top:549px;" width="56" height="72" viewBox="0 0 56 72"><g fill="none" stroke="#0a14f0" stroke-width="1.3"><path d="M3.5 36.5L19 29L35 36.5L19 44Z"/><path d="M3.5 36.5H35"/><path d="M19 36.5L52.7 3.3M19 36.5L52.7 69.9"/></g></svg>
<svg style="position:absolute;left:537px;top:972px;" width="60" height="50" viewBox="0 0 60 50"><path d="M10 12V42" stroke="#10e010" stroke-width="2" fill="none"/><path d="M10 42H39" stroke="#f01010" stroke-width="2"/><path d="M4.5 14L10 7.5L15.5 14Z" fill="#10e010"/><path d="M37 37L44.5 42L37 47Z" fill="#f01010"/><text x="15" y="12" font-family="Liberation Sans" font-size="10" fill="#10c010">Y</text><text x="50" y="46" font-family="Liberation Sans" font-size="10" fill="#e01010">X</text></svg>
<div style="left:505px;top:1036px;width:1049px;height:22px;background:#535353"></div>
<div style="left:506px;top:1037px;width:70px;height:19px;background:#626262;border:1px solid #6e6e6e;border-top:none;border-radius:0 0 2px 2px"></div>
<div class="t" style="left:514px;top:1040px;font-size:11px">World Edit</div>
<div style="left:578px;top:1037px;width:88px;height:17px;background:#555;border:1px solid #4a4a4a;border-top:none;border-radius:0 0 2px 2px"></div>
<div class="t" style="left:584px;top:1039px;font-size:11px">World Camera</div>
<div style="left:667px;top:1037px;width:52px;height:17px;background:#555;border:1px solid #4a4a4a;border-top:none;border-radius:0 0 2px 2px"></div>
<div class="t" style="left:673px;top:1039px;font-size:11px">Engine</div>
<div style="left:1554px;top:47px;width:366px;height:1011px;background:#535353"></div>
<div style="left:1554px;top:47px;width:3px;height:1011px;background:#4a4a4a"></div>
<div style="left:1558px;top:48px;width:86px;height:28px;background:#5f5f5f;border:1px solid #6a6a6a;border-bottom:none;border-radius:2px 2px 0 0"></div>
<div class="t" style="left:1565px;top:55px;font-size:11px">All ( 240 )</div>
<svg style="position:absolute;left:1619px;top:57px;" width="10" height="10" viewBox="0 0 10 10"><path d="M1 1L9 9M9 1L1 9" stroke="#ddd" stroke-width="1.2"/></svg>
<div style="left:1646px;top:50px;width:112px;height:23px;background:#555;border:1px solid #4a4a4a;border-bottom:none;border-radius:2px 2px 0 0"></div>
<div class="t" style="left:1653px;top:56px;font-size:11px">Warnings ( 18 )</div>
<svg style="position:absolute;left:1733px;top:58px;" width="10" height="10" viewBox="0 0 10 10"><path d="M1 1L9 9M9 1L1 9" stroke="#ddd" stroke-width="1.2"/></svg>
<div style="left:1760px;top:50px;width:67px;height:23px;background:#555;border:1px solid #4a4a4a;border-bottom:none;border-radius:2px 2px 0 0"></div>
<div class="t" style="left:1767px;top:56px;font-size:11px">Errors</div>
<svg style="position:absolute;left:1804px;top:58px;" width="10" height="10" viewBox="0 0 10 10"><path d="M1 1L9 9M9 1L1 9" stroke="#ddd" stroke-width="1.2"/></svg>
<div style="left:1557px;top:75px;width:362px;height:1px;background:#6a6a6a"></div>
<div style="left:1919px;top:27px;width:1px;height:1051px;background:#3e453e"></div>
<div style="left:1559px;top:76px;width:345px;height:925px;background:#333"></div>
<div style="left:1904px;top:76px;width:14px;height:925px;background:#5a5a5a;border-right:1px solid #777"></div>
<div style="left:1904px;top:76px;width:13px;height:14px;background:#5e5e5e;border:1px solid #4c4c4c"></div>
<svg style="position:absolute;left:1906px;top:80px;" width="9" height="5" viewBox="0 0 9 5"><path d="M0 5L4.5 0L9 5Z" fill="#ddd"/></svg>
<div style="left:1904px;top:891px;width:13px;height:97px;background:#5e5e5e;border:1px solid #4c4c4c;border-radius:2px"></div>
<div style="left:1904px;top:988px;width:13px;height:13px;background:#5e5e5e;border:1px solid #4c4c4c"></div>
<svg style="position:absolute;left:1906px;top:992px;" width="9" height="5" viewBox="0 0 9 5"><path d="M0 0L4.5 5L9 0Z" fill="#ddd"/></svg>
<div style="left:1559px;top:76px;width:345px;height:925px;overflow:hidden">
<div class="m" style="left:5px;top:-6.3px">Total seeks: 0</div>
<div class="m" style="left:5px;top:7.5px">&lt;=1KB : 0</div>
<div class="m" style="left:5px;top:21.3px">&lt;=16KB : 0</div>
<div class="m" style="left:5px;top:35.2px">&lt;=128KB : 0</div>
<div class="m" style="left:5px;top:49.0px">&lt;=256KB : 0</div>
<div class="m" style="left:5px;top:62.9px">&lt;=512KB : 0</div>
<div class="m" style="left:5px;top:76.7px">rest : 0</div>
<div class="m" style="left:5px;top:90.6px">Geometry</div>
<div class="m" style="left:5px;top:104.4px">Total bytes read: 0.00MB</div>
<div class="m" style="left:5px;top:118.3px">Total seeks: 0</div>
<div class="m" style="left:5px;top:132.1px">&lt;=1KB : 0</div>
<div class="m" style="left:5px;top:146.0px">&lt;=16KB : 0</div>
<div class="m" style="left:5px;top:159.8px">&lt;=128KB : 0</div>
<div class="m" style="left:5px;top:173.7px">&lt;=256KB : 0</div>
<div class="m" style="left:5px;top:187.5px">&lt;=512KB : 0</div>
<div class="m" style="left:5px;top:201.3px">rest : 0</div>
<div class="m" style="left:5px;top:215.2px">Audio</div>
<div class="m" style="left:5px;top:229.0px">Total bytes read: 0.00MB</div>
<div class="m" style="left:5px;top:242.9px">Total seeks: 0</div>
<div class="m" style="left:5px;top:256.7px">Geom cache</div>
<div class="m" style="left:5px;top:270.6px">Total bytes read: 0.00MB</div>
<div class="m" style="left:5px;top:284.4px">Total seeks: 0</div>
<div class="m" style="left:5px;top:298.3px">Light probe</div>
<div class="m" style="left:5px;top:312.1px">Total bytes read: 0.00MB</div>
<div class="m" style="left:5px;top:326.0px">Total seeks: 0</div>
<div class="m" style="left:5px;top:339.8px">Video</div>
<div class="m" style="left:5px;top:353.6px">Total bytes read: 0.00MB</div>
<div class="m" style="left:5px;top:367.5px">Total seeks: 0</div>
<div class="m" style="left:5px;top:381.3px">Creating swapchain.</div>
<div class="m" style="left:5px;top:395.2px">Prefetch complete.</div>
<div class="m" style="left:5px;top:409.0px">Total bytes read: 0.00MB</div>
<div class="m" style="left:5px;top:422.9px">Total seeks: 0</div>
<div class="m" style="left:5px;top:436.7px">Image</div>
<div class="m" style="left:5px;top:450.6px">Total bytes read: 0.00MB</div>
<div class="m" style="left:5px;top:464.4px">Total seeks: 0</div>
<div class="m" style="left:5px;top:478.3px">&lt;=1KB : 0</div>
<div class="m" style="left:5px;top:492.1px">&lt;=16KB : 0</div>
<div class="m" style="left:5px;top:506.0px">&lt;=128KB : 0</div>
<div class="m" style="left:5px;top:519.8px">&lt;=256KB : 0</div>
<div class="m" style="left:5px;top:533.6px">&lt;=512KB : 0</div>
<div class="m" style="left:5px;top:547.5px">rest : 0</div>
<div class="m" style="left:5px;top:561.3px">Geometry</div>
<div class="m" style="left:5px;top:575.2px">Total bytes read: 0.00MB</div>
<div class="m" style="left:5px;top:589.0px">Total seeks: 0</div>
<div class="m" style="left:5px;top:602.9px">&lt;=1KB : 0</div>
<div class="m" style="left:5px;top:616.7px">&lt;=16KB : 0</div>
<div class="m" style="left:5px;top:630.6px">&lt;=128KB : 0</div>
<div class="m" style="left:5px;top:644.4px">&lt;=256KB : 0</div>
<div class="m" style="left:5px;top:658.3px">&lt;=512KB : 0</div>
<div class="m" style="left:5px;top:672.1px">rest : 0</div>
<div class="m" style="left:5px;top:686.0px">Audio</div>
<div class="m" style="left:5px;top:699.8px">Total bytes read: 0.00MB</div>
<div class="m" style="left:5px;top:713.6px">Total seeks: 0</div>
<div class="m" style="left:5px;top:727.5px">Geom cache</div>
<div class="m" style="left:5px;top:741.3px">Total bytes read: 0.00MB</div>
<div class="m" style="left:5px;top:755.2px">Total seeks: 0</div>
<div class="m" style="left:5px;top:769.0px">Light probe</div>
<div class="m" style="left:5px;top:782.9px">Total bytes read: 0.00MB</div>
<div class="m" style="left:5px;top:796.7px">Total seeks: 0</div>
<div class="m" style="left:5px;top:810.6px">Video</div>
<div class="m" style="left:5px;top:824.4px">Total bytes read: 0.00MB</div>
<div class="m" style="left:5px;top:838.3px">Total seeks: 0</div>
<div class="m" style="left:5px;top:852.1px">idVulkanMemoryAllocator::CollectGarbage() took</div>
<div class="m" style="left:5px;top:866.0px">12.227ms to free 112 objects</div>
<div class="m" style="left:5px;top:879.8px">idVulkanMemoryAllocator::FreeEmptyBlocks: Freed</div>
<div class="m" style="left:5px;top:893.6px">64.000 MiB</div>
<div class="m" style="left:5px;top:907.5px">Creating swapchain.</div>
</div>
<div style="left:1558px;top:1010px;width:26px;height:21px;background:#5a5a5a;border:1px solid #484848;border-radius:2px"></div>
<div style="left:1592px;top:1010px;width:26px;height:21px;background:#5a5a5a;border:1px solid #484848;border-radius:2px"></div>
<div style="left:1626px;top:1010px;width:25px;height:21px;background:#5a5a5a;border:1px solid #484848;border-radius:2px"></div>
<svg style="position:absolute;left:1565px;top:1014px;" width="12" height="12" viewBox="0 0 12 12"><path d="M1 1L11 11M11 1L1 11" stroke="#ddd" stroke-width="1.2"/></svg>
<svg style="position:absolute;left:1598px;top:1013px;" width="14" height="14" viewBox="0 0 14 14"><circle cx="7" cy="7" r="3.5" fill="none" stroke="#e0e0e0" stroke-width="2"/><path d="M7 1V3M7 11V13M1 7H3M11 7H13M2.8 2.8L4.2 4.2M9.8 9.8L11.2 11.2M11.2 2.8L9.8 4.2M4.2 9.8L2.8 11.2" stroke="#e0e0e0" stroke-width="2"/></svg>
<svg style="position:absolute;left:1631px;top:1013px;" width="14" height="14" viewBox="0 0 14 14"><circle cx="5.5" cy="5.5" r="4" fill="#c8d8f0" stroke="#eee" stroke-width="1.2"/><path d="M8.5 8.5L12.5 12.5" stroke="#ddd" stroke-width="2.2"/></svg>
<div style="left:1659px;top:1011px;width:261px;height:20px;background:#5e5e5e;border:1px solid #484848;border-radius:2px"></div>
<div style="left:1557px;top:1033px;width:363px;height:23px;background:#4c4c4c"></div>
<div style="left:1558px;top:1035px;width:46px;height:19px;background:#555;border:1px solid #4a4a4a;border-top:none;border-radius:0 0 2px 2px"></div>
<div class="t" style="left:1565px;top:1038px;font-size:11px">Pa...</div>
<div style="left:1605px;top:1035px;width:68px;height:19px;background:#555;border:1px solid #4a4a4a;border-top:none;border-radius:0 0 2px 2px"></div>
<div class="t" style="left:1612px;top:1038px;font-size:11px">Environ...</div>
<div style="left:1675px;top:1035px;width:41px;height:19px;background:#555;border:1px solid #4a4a4a;border-top:none;border-radius:0 0 2px 2px"></div>
<div class="t" style="left:1682px;top:1038px;font-size:11px">Vi...</div>
<div style="left:1718px;top:1035px;width:47px;height:19px;background:#555;border:1px solid #4a4a4a;border-top:none;border-radius:0 0 2px 2px"></div>
<div class="t" style="left:1725px;top:1038px;font-size:11px">Ma...</div>
<div style="left:1766px;top:1035px;width:42px;height:19px;background:#555;border:1px solid #4a4a4a;border-top:none;border-radius:0 0 2px 2px"></div>
<div class="t" style="left:1773px;top:1038px;font-size:11px">St...</div>
<div style="left:1810px;top:1035px;width:47px;height:19px;background:#555;border:1px solid #4a4a4a;border-top:none;border-radius:0 0 2px 2px"></div>
<div class="t" style="left:1817px;top:1038px;font-size:11px">Ma...</div>
<div style="left:1859px;top:1033px;width:60px;height:23px;background:#5f5f5f;border:1px solid #6a6a6a;border-top:none;border-radius:0 0 2px 2px"></div>
<div class="t" style="left:1867px;top:1039px;font-size:11px">Co...</div>
<svg style="position:absolute;left:1896px;top:1040px;" width="11" height="11" viewBox="0 0 11 11"><path d="M1 1L10 10M10 1L1 10" stroke="#ddd" stroke-width="1.2"/></svg>
<div style="left:0px;top:1056px;width:1920px;height:24px;background:#535353;border-top:1px solid #484848"></div>
<div class="t" style="left:8px;top:1062px;font-size:11.5px;color:#eaeaea">x:: -3.0&nbsp; y:: -1.0&nbsp; z:: 0.0&nbsp; (-3.0 -1.0 0.0)&nbsp; Currently Editing:&nbsp; maps/unnamed</div>
<div class="t" style="right:34px;top:1062px;font-size:11px;color:#eaeaea">G:1m T:1.00 R:45 C:50 L:MR Tr:W</div>
<svg style="position:absolute;left:1906px;top:1067px;" width="12" height="12" viewBox="0 0 12 12"><g fill="#888"><rect x="9" y="0" width="2" height="2"/><rect x="6" y="3" width="2" height="2"/><rect x="9" y="3" width="2" height="2"/><rect x="3" y="6" width="2" height="2"/><rect x="6" y="6" width="2" height="2"/><rect x="9" y="6" width="2" height="2"/><rect x="0" y="9" width="2" height="2"/><rect x="3" y="9" width="2" height="2"/><rect x="6" y="9" width="2" height="2"/><rect x="9" y="9" width="2" height="2"/></g></svg>
<div style="left:0px;top:1078px;width:1920px;height:1px;background:#3e453e"></div>
<div style="left:0px;top:1079px;width:1920px;height:1px;background:#b05aa8"></div>
</body></html>
